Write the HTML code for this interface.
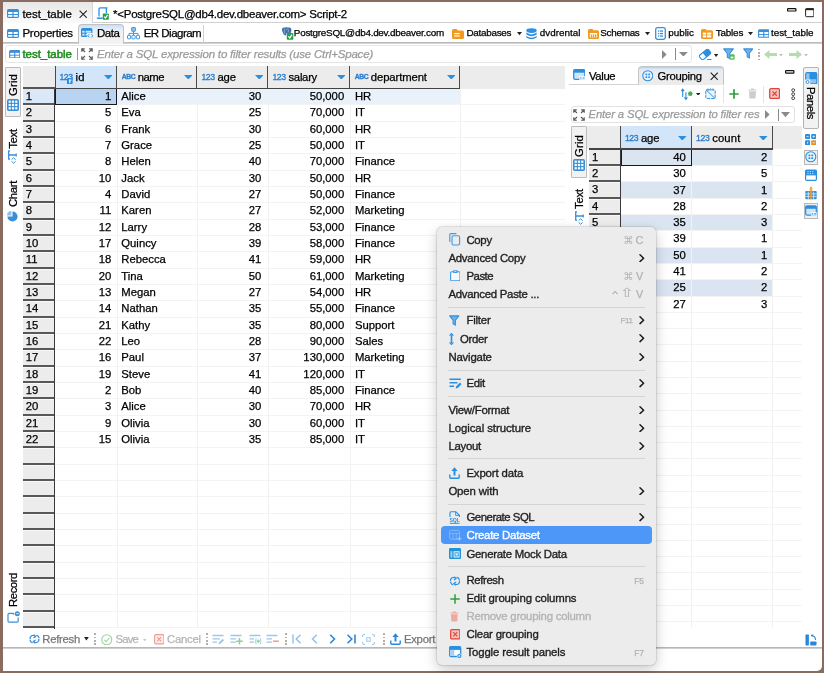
<!DOCTYPE html>
<html><head><meta charset="utf-8"><title>DBeaver</title>
<style>
html,body{margin:0;padding:0;}
body{width:824px;height:673px;overflow:hidden;background:#fff;font-family:"Liberation Sans",sans-serif;position:relative;}
#root{position:absolute;left:0;top:0;width:824px;height:673px;overflow:hidden;background:#fff;}
#root div,#root svg{position:absolute;box-sizing:border-box;}
#root{-webkit-text-stroke:0.25px;will-change:transform;background:transparent !important;}
</style></head><body><div id="root">
<div style="left:0px;top:0px;width:824px;height:673px;background:#8a6b5f;"></div>
<div style="left:2.5px;top:2px;width:819.5px;height:668.5px;background:#fff;border-radius:0 0 5px 0;"></div>
<div style="left:3px;top:2px;width:89.5px;height:20.5px;background:linear-gradient(#e7e7e7,#fafafa);border-right:1px solid #d4d4d4;"></div>
<svg style="left:7.3px;top:9px;" width="12" height="9" viewBox="0 0 12 9"><rect x="0" y="0" width="12" height="9" rx="1.6" fill="#3a8fd8"/><rect x="1.2" y="3" width="4.2" height="2" fill="#fff"/><rect x="6.6" y="3" width="4.2" height="2" fill="#fff"/><rect x="1.2" y="6" width="4.2" height="1.8" fill="#fff"/><rect x="6.6" y="6" width="4.2" height="1.8" fill="#fff"/></svg>
<div style="top:6.00px;font-size:11.5px;line-height:16px;color:#000;white-space:pre;letter-spacing:-0.027px;left:22.4px;">test_table</div>
<svg style="left:78.6px;top:10px;" width="8.4" height="8.4" viewBox="0 0 8.4 8.4"><path d="M0.6 0.6L7.8 7.8M7.8 0.6L0.6 7.8" stroke="#222" stroke-width="1.1" fill="none"/></svg>
<div style="top:6.00px;font-size:11.5px;line-height:16px;color:#000;white-space:pre;letter-spacing:-0.242px;left:113px;">*&lt;PostgreSQL@db4.dev.dbeaver.com&gt; Script-2</div>
<div style="left:93px;top:22px;width:729px;height:1px;background:#d0d0d0;"></div>
<div style="left:3px;top:41.8px;width:819px;height:1.8px;background:linear-gradient(#b2b2b2,#dcdcdc);"></div>
<svg style="left:7.3px;top:28.5px;" width="12" height="9" viewBox="0 0 12 9"><rect x="0" y="0" width="12" height="9" rx="1.6" fill="#3a8fd8"/><rect x="1.2" y="3" width="4.2" height="2" fill="#fff"/><rect x="6.6" y="3" width="4.2" height="2" fill="#fff"/><rect x="1.2" y="6" width="4.2" height="1.8" fill="#fff"/><rect x="6.6" y="6" width="4.2" height="1.8" fill="#fff"/></svg>
<div style="top:25.00px;font-size:11.5px;line-height:16px;color:#000;white-space:pre;letter-spacing:-0.191px;left:22.4px;">Properties</div>
<div style="left:77.5px;top:23.5px;width:46.5px;height:20px;background:linear-gradient(#c9dff8 0,#e4eefa 22%,#f1f1f1 45%,#f3f3f3);border:1px solid #c2c2c2;border-bottom:none;border-radius:4px 4px 0 0;"></div>
<div style="top:25.00px;font-size:11.5px;line-height:16px;color:#000;white-space:pre;letter-spacing:-0.448px;left:97px;">Data</div>
<div style="top:25.00px;font-size:11.5px;line-height:16px;color:#000;white-space:pre;letter-spacing:-0.513px;left:143.7px;">ER Diagram</div>
<div style="left:203px;top:25px;width:1px;height:18px;background:#d0d0d0;"></div>
<svg style="left:280.6px;top:27px;" width="13" height="13" viewBox="0 0 13 13"><path d="M1.2 1.6Q2.2 0.2 4 0.6Q5.4 -0.2 7 0.6Q9 0 10 1.4Q10.8 3 10 5L9 7.6Q8.4 8.4 7.6 7.8L7.4 6Q6.4 6.6 5.4 6.2L5.2 8Q4.4 8.8 3.4 8Q2.4 7 1.8 5.4Q0.6 3.4 1.2 1.6Z" fill="#3d6fa8"/><path d="M3.6 1.6Q2.8 3.6 3.8 6.6M6.8 1.4Q7.8 3.2 7.2 5.4M5 2.6Q5.8 2.2 6.2 3" stroke="#a9c4e2" stroke-width="0.7" fill="none"/><rect x="5.8" y="5.9" width="6.5" height="6.8" rx="1" fill="#1fa146"/><path d="M7.4 9.4L8.8 10.9L11 7.6" stroke="#fff" stroke-width="1.3" fill="none"/></svg>
<div style="top:24.90px;font-size:9.9px;line-height:16px;color:#000;white-space:pre;letter-spacing:-0.247px;left:293.8px;">PostgreSQL@db4.dev.dbeaver.com</div>
<svg style="left:452px;top:28.5px;" width="12" height="10" viewBox="0 0 12 10"><path d="M0 1.5Q0 0 1.5 0H4.5L6 1.5H10.5Q12 1.5 12 3V8.5Q12 10 10.5 10H1.5Q0 10 0 8.5Z" fill="#f39a1e"/><rect x="2.2" y="4" width="5.5" height="1.2" fill="#fff"/><rect x="2.2" y="6.4" width="5.5" height="1.2" fill="#fff"/></svg>
<div style="top:24.90px;font-size:9.9px;line-height:16px;color:#000;white-space:pre;letter-spacing:-0.259px;left:466.4px;">Databases</div>
<svg style="left:516.5px;top:32.4px;" width="5" height="3.2" viewBox="0 0 5 3.2"><path d="M0 0H5L2.5 3.2Z" fill="#222"/></svg>
<svg style="left:526px;top:28px;" width="11" height="12" viewBox="0 0 11 12"><ellipse cx="5.5" cy="2.6" rx="5.2" ry="2.4" fill="#2f8fe0"/><path d="M0.3 4.6Q5.5 8.2 10.7 4.6V6.4Q5.5 10 0.3 6.4Z" fill="#2f8fe0"/><path d="M0.3 8Q5.5 11.6 10.7 8V9.4Q5.5 13 0.3 9.4Z" fill="#2f8fe0"/></svg>
<div style="top:24.90px;font-size:9.9px;line-height:16px;color:#000;white-space:pre;letter-spacing:0.008px;left:539.7px;">dvdrental</div>
<svg style="left:588px;top:28.5px;" width="11" height="10" viewBox="0 0 11 10"><path d="M0 1.5Q0 0 1.5 0H4.5L5.5 1.3H9.5Q11 1.3 11 2.8V8.5Q11 10 9.5 10H1.5Q0 10 0 8.5Z" fill="#f39a1e"/><rect x="1.8" y="4" width="7.4" height="4.4" fill="#fff"/><rect x="2.8" y="5.4" width="1.4" height="3" fill="#f39a1e"/><rect x="4.9" y="5.4" width="1.4" height="3" fill="#f39a1e"/><rect x="7" y="5.4" width="1.4" height="3" fill="#f39a1e"/></svg>
<div style="top:24.90px;font-size:9.9px;line-height:16px;color:#000;white-space:pre;letter-spacing:-0.281px;left:600.3px;">Schemas</div>
<svg style="left:645px;top:32.4px;" width="5" height="3.2" viewBox="0 0 5 3.2"><path d="M0 0H5L2.5 3.2Z" fill="#222"/></svg>
<svg style="left:655px;top:26.8px;" width="11" height="13" viewBox="0 0 11 13"><rect x="0.7" y="0.7" width="9.6" height="11.6" rx="1.8" fill="#fff" stroke="#3a8fd8" stroke-width="1.3"/><rect x="3" y="3.4" width="1.3" height="1.3" fill="#3a8fd8"/><rect x="5" y="3.4" width="3" height="1.3" fill="#3a8fd8"/><rect x="3" y="5.9" width="1.3" height="1.3" fill="#3a8fd8"/><rect x="5" y="5.9" width="3" height="1.3" fill="#3a8fd8"/><rect x="3" y="8.4" width="1.3" height="1.3" fill="#3a8fd8"/><rect x="5" y="8.4" width="3" height="1.3" fill="#3a8fd8"/></svg>
<div style="top:24.90px;font-size:9.9px;line-height:16px;color:#000;white-space:pre;letter-spacing:-0.011px;left:668.2px;">public</div>
<svg style="left:701.3px;top:28.5px;" width="12" height="10" viewBox="0 0 12 10"><path d="M0 1.5Q0 0 1.5 0H4.5L5.5 1.3H10.5Q12 1.3 12 2.8V8.5Q12 10 10.5 10H1.5Q0 10 0 8.5Z" fill="#f39a1e"/><rect x="1.8" y="3.6" width="3.2" height="2" fill="#fff"/><rect x="5.8" y="3.6" width="4.4" height="2" fill="#fff"/><rect x="1.8" y="6.4" width="3.2" height="2" fill="#fff"/><rect x="5.8" y="6.4" width="4.4" height="2" fill="#fff"/></svg>
<div style="top:24.90px;font-size:9.9px;line-height:16px;color:#000;white-space:pre;letter-spacing:-0.203px;left:715.8px;">Tables</div>
<svg style="left:748px;top:32.4px;" width="5" height="3.2" viewBox="0 0 5 3.2"><path d="M0 0H5L2.5 3.2Z" fill="#222"/></svg>
<svg style="left:757.7px;top:29px;" width="11.5" height="9" viewBox="0 0 12 9"><rect x="0" y="0" width="12" height="9" rx="1.6" fill="#3a8fd8"/><rect x="1.2" y="3" width="4.2" height="2" fill="#fff"/><rect x="6.6" y="3" width="4.2" height="2" fill="#fff"/><rect x="1.2" y="6" width="4.2" height="1.8" fill="#fff"/><rect x="6.6" y="6" width="4.2" height="1.8" fill="#fff"/></svg>
<div style="top:24.90px;font-size:9.9px;line-height:16px;color:#000;white-space:pre;letter-spacing:-0.023px;left:771px;">test_table</div>
<div style="left:4.5px;top:45.3px;width:687.5px;height:17.5px;border:1px solid #e6e6e6;border-radius:3px;"></div>
<svg style="left:8.7px;top:49.8px;" width="11.5" height="8.5" viewBox="0 0 12 9"><rect x="0" y="0" width="12" height="9" rx="1.6" fill="#3a8fd8"/><rect x="1.2" y="3" width="4.2" height="2" fill="#fff"/><rect x="6.6" y="3" width="4.2" height="2" fill="#fff"/><rect x="1.2" y="6" width="4.2" height="1.8" fill="#fff"/><rect x="6.6" y="6" width="4.2" height="1.8" fill="#fff"/></svg>
<div style="top:46.00px;font-size:11.5px;line-height:16px;color:#1e8b1e;white-space:pre;letter-spacing:-0.027px;left:22.4px;-webkit-text-stroke:0.5px #1e8b1e;">test_table</div>
<div style="left:77.2px;top:48px;width:1px;height:12px;background:#9a9a9a;"></div>
<svg style="left:81px;top:48px;" width="12" height="12" viewBox="0 0 12 12"><g stroke="#585858" stroke-width="1.15" fill="none"><path d="M0.8 3.8V0.8H3.8M0.8 0.8L4 4"/><path d="M11.2 3.8V0.8H8.2M11.2 0.8L8 4"/><path d="M0.8 8.2V11.2H3.8M0.8 11.2L4 8"/><path d="M11.2 8.2V11.2H8.2M11.2 11.2L8 8"/></g></svg>
<div style="top:46.00px;font-size:11.5px;line-height:16px;color:#9a9a9a;white-space:pre;letter-spacing:-0.183px;font-style:italic;left:97px;">Enter a SQL expression to filter results (use Ctrl+Space)</div>
<svg style="left:661.5px;top:49.5px;" width="5" height="9" viewBox="0 0 5 9"><path d="M0 0L4.6 4.5L0 9Z" fill="#8a8a8a"/></svg>
<div style="left:675px;top:47.7px;width:1px;height:12px;background:#8a8a8a;"></div>
<svg style="left:678.8px;top:51.8px;" width="8.8" height="4.6" viewBox="0 0 8.8 4.6"><path d="M0 0H8.8L4.4 4.6Z" fill="#8a8a8a"/></svg>
<svg style="left:699px;top:48.5px;" width="13" height="11.5" viewBox="0 0 13 11.5"><g transform="rotate(-40 6 5.5)"><rect x="0.2" y="2.6" width="11.6" height="5.8" rx="1.6" fill="#fff" stroke="#2b8fe0" stroke-width="1.1"/><path d="M5.2 2.6H10.2Q11.8 2.6 11.8 4.2V6.8Q11.8 8.4 10.2 8.4H5.2Z" fill="#2b8fe0"/></g><rect x="8.2" y="10" width="4.2" height="1.2" fill="#2b8fe0"/></svg>
<svg style="left:714.2px;top:53.5px;" width="4.2" height="3" viewBox="0 0 4.2 3"><path d="M0 0H4.2L2.1 3Z" fill="#222"/></svg>
<svg style="left:722.6px;top:47.5px;" width="11" height="12" viewBox="0 0 11 12"><path d="M0.7 0.9H10.3L6.7 5.5V10.6L4.3 9.2V5.5Z" fill="#6cb2ec" stroke="#3a8fd8" stroke-width="1.1" stroke-linejoin="round"/></svg>
<svg style="left:729.3px;top:54px;" width="6" height="6" viewBox="0 0 6 6"><rect x="0.3" y="0.3" width="5.4" height="5.4" rx="1.4" fill="#55b85f"/><rect x="1.6" y="2.6" width="2.8" height="1.8" fill="#fff"/></svg>
<svg style="left:742.6px;top:47.5px;" width="10.5" height="11.5" viewBox="0 0 11 12"><path d="M0.7 0.9H10.3L6.7 5.5V10.6L4.3 9.2V5.5Z" fill="#6cb2ec" stroke="#3a8fd8" stroke-width="1.1" stroke-linejoin="round"/></svg>
<div style="left:758.2px;top:48.6px;width:1.7px;height:1.7px;background:#b7ada1;"></div>
<div style="left:758.2px;top:51.9px;width:1.7px;height:1.7px;background:#b7ada1;"></div>
<div style="left:758.2px;top:55.2px;width:1.7px;height:1.7px;background:#b7ada1;"></div>
<div style="left:758.2px;top:58.5px;width:1.7px;height:1.7px;background:#b7ada1;"></div>
<svg style="left:764px;top:49.5px;" width="13" height="9" viewBox="0 0 13 9"><path d="M0 4.5L5.5 0V3H13V6H5.5V9Z" fill="#b5dcae"/></svg>
<svg style="left:779.3px;top:53.7px;" width="4" height="2.6" viewBox="0 0 4 2.6"><path d="M0 0H4L2.0 2.6Z" fill="#c2c2c2"/></svg>
<svg style="left:788.5px;top:49.5px;" width="13" height="9" viewBox="0 0 13 9"><path d="M13 4.5L7.5 0V3H0V6H7.5V9Z" fill="#b5dcae"/></svg>
<svg style="left:803.8px;top:53.7px;" width="4" height="2.6" viewBox="0 0 4 2.6"><path d="M0 0H4L2.0 2.6Z" fill="#c2c2c2"/></svg>
<div style="left:23px;top:66px;width:542px;height:22px;background:#ececec;"></div>
<div style="left:55px;top:103.5px;width:510px;height:1px;background:#f3f3f3;"></div>
<div style="left:55px;top:120.5px;width:510px;height:1px;background:#f3f3f3;"></div>
<div style="left:55px;top:136.5px;width:510px;height:1px;background:#f3f3f3;"></div>
<div style="left:55px;top:152.5px;width:510px;height:1px;background:#f3f3f3;"></div>
<div style="left:55px;top:169.5px;width:510px;height:1px;background:#f3f3f3;"></div>
<div style="left:55px;top:185.5px;width:510px;height:1px;background:#f3f3f3;"></div>
<div style="left:55px;top:201.5px;width:510px;height:1px;background:#f3f3f3;"></div>
<div style="left:55px;top:218.5px;width:510px;height:1px;background:#f3f3f3;"></div>
<div style="left:55px;top:234.5px;width:510px;height:1px;background:#f3f3f3;"></div>
<div style="left:55px;top:250.5px;width:510px;height:1px;background:#f3f3f3;"></div>
<div style="left:55px;top:267.5px;width:510px;height:1px;background:#f3f3f3;"></div>
<div style="left:55px;top:283.5px;width:510px;height:1px;background:#f3f3f3;"></div>
<div style="left:55px;top:299.5px;width:510px;height:1px;background:#f3f3f3;"></div>
<div style="left:55px;top:316.5px;width:510px;height:1px;background:#f3f3f3;"></div>
<div style="left:55px;top:332.5px;width:510px;height:1px;background:#f3f3f3;"></div>
<div style="left:55px;top:348.5px;width:510px;height:1px;background:#f3f3f3;"></div>
<div style="left:55px;top:365.5px;width:510px;height:1px;background:#f3f3f3;"></div>
<div style="left:55px;top:381.5px;width:510px;height:1px;background:#f3f3f3;"></div>
<div style="left:55px;top:397.5px;width:510px;height:1px;background:#f3f3f3;"></div>
<div style="left:55px;top:414.5px;width:510px;height:1px;background:#f3f3f3;"></div>
<div style="left:55px;top:430.5px;width:510px;height:1px;background:#f3f3f3;"></div>
<div style="left:55px;top:446.5px;width:510px;height:1px;background:#f3f3f3;"></div>
<div style="left:55px;top:463.5px;width:510px;height:1px;background:#f3f3f3;"></div>
<div style="left:55px;top:479.5px;width:510px;height:1px;background:#f3f3f3;"></div>
<div style="left:55px;top:495.5px;width:510px;height:1px;background:#f3f3f3;"></div>
<div style="left:55px;top:512.5px;width:510px;height:1px;background:#f3f3f3;"></div>
<div style="left:55px;top:528.5px;width:510px;height:1px;background:#f3f3f3;"></div>
<div style="left:55px;top:544.5px;width:510px;height:1px;background:#f3f3f3;"></div>
<div style="left:55px;top:561.5px;width:510px;height:1px;background:#f3f3f3;"></div>
<div style="left:55px;top:577.5px;width:510px;height:1px;background:#f3f3f3;"></div>
<div style="left:55px;top:593.5px;width:510px;height:1px;background:#f3f3f3;"></div>
<div style="left:55px;top:610.5px;width:510px;height:1px;background:#f3f3f3;"></div>
<div style="left:55px;top:626.5px;width:510px;height:1px;background:#f3f3f3;"></div>
<div style="left:116.5px;top:88px;width:1px;height:538.89px;background:#f1f1f1;"></div>
<div style="left:196.5px;top:88px;width:1px;height:538.89px;background:#f1f1f1;"></div>
<div style="left:267.5px;top:88px;width:1px;height:538.89px;background:#f1f1f1;"></div>
<div style="left:349.5px;top:88px;width:1px;height:538.89px;background:#f1f1f1;"></div>
<div style="left:459.5px;top:88px;width:1px;height:538.89px;background:#f1f1f1;"></div>
<div style="left:460px;top:66px;width:105px;height:22.6px;background:#ececec;"></div>
<div style="left:55px;top:88px;width:405px;height:16.33px;background:#e9f1fb;"></div>
<div style="left:55.3px;top:87.8px;width:61.4px;height:17.13px;background:#b9d4f1;border:1.4px solid #1a1a1a;"></div>
<div style="left:55px;top:66px;width:62px;height:22px;background:#d3e5f8;border-right:1px solid #4a4a4a;"></div>
<div style="top:69.00px;font-size:8.7px;line-height:16px;color:#2b7fd0;white-space:pre;letter-spacing:-0.372px;left:59.400000000000006px;-webkit-text-stroke:0.35px #2b7fd0;">123</div>
<svg style="left:67.4px;top:77.8px;" width="5.6" height="6.4" viewBox="0 0 5.6 6.4"><rect x="0" y="0" width="5.6" height="6.4" rx="1.2" fill="#2b8fe0"/><rect x="2.2" y="1.6" width="1.2" height="3.6" fill="#fff"/><rect x="2.2" y="1.6" width="2.2" height="1" fill="#fff"/></svg>
<div style="top:69.20px;font-size:11.3px;line-height:16px;color:#000;white-space:pre;letter-spacing:0.202px;left:75.5px;">id</div>
<svg style="left:103.5px;top:74.9px;" width="8.6" height="4.6" viewBox="0 0 8.6 4.6"><path d="M0 0H8.6L4.3 4.6Z" fill="#2b8fe0"/></svg>
<div style="left:117px;top:66px;width:80px;height:22px;background:#ececec;border-right:1px solid #4a4a4a;"></div>
<div style="top:69.20px;font-size:6.8px;line-height:16px;color:#2b7fd0;white-space:pre;letter-spacing:-0.444px;font-weight:bold;left:121.8px;-webkit-text-stroke:0.3px #2b7fd0;">ABC</div>
<div style="top:69.20px;font-size:11.3px;line-height:16px;color:#000;white-space:pre;letter-spacing:-0.517px;left:137.8px;">name</div>
<svg style="left:183.5px;top:74.9px;" width="8.6" height="4.6" viewBox="0 0 8.6 4.6"><path d="M0 0H8.6L4.3 4.6Z" fill="#2b8fe0"/></svg>
<div style="left:197px;top:66px;width:71px;height:22px;background:#ececec;border-right:1px solid #4a4a4a;"></div>
<div style="top:69.00px;font-size:8.7px;line-height:16px;color:#2b7fd0;white-space:pre;letter-spacing:-0.372px;left:201.39999999999998px;-webkit-text-stroke:0.35px #2b7fd0;">123</div>
<div style="top:69.20px;font-size:11.3px;line-height:16px;color:#000;white-space:pre;letter-spacing:-0.218px;left:217.5px;">age</div>
<svg style="left:254.5px;top:74.9px;" width="8.6" height="4.6" viewBox="0 0 8.6 4.6"><path d="M0 0H8.6L4.3 4.6Z" fill="#2b8fe0"/></svg>
<div style="left:268px;top:66px;width:82px;height:22px;background:#ececec;border-right:1px solid #4a4a4a;"></div>
<div style="top:69.00px;font-size:8.7px;line-height:16px;color:#2b7fd0;white-space:pre;letter-spacing:-0.372px;left:272.4px;-webkit-text-stroke:0.35px #2b7fd0;">123</div>
<div style="top:69.20px;font-size:11.3px;line-height:16px;color:#000;white-space:pre;letter-spacing:-0.274px;left:288.5px;">salary</div>
<svg style="left:336.5px;top:74.9px;" width="8.6" height="4.6" viewBox="0 0 8.6 4.6"><path d="M0 0H8.6L4.3 4.6Z" fill="#2b8fe0"/></svg>
<div style="left:350px;top:66px;width:110px;height:22px;background:#ececec;border-right:1px solid #4a4a4a;"></div>
<div style="top:69.20px;font-size:6.8px;line-height:16px;color:#2b7fd0;white-space:pre;letter-spacing:-0.444px;font-weight:bold;left:354.8px;-webkit-text-stroke:0.3px #2b7fd0;">ABC</div>
<div style="top:69.20px;font-size:11.3px;line-height:16px;color:#000;white-space:pre;letter-spacing:-0.106px;left:370.8px;">department</div>
<svg style="left:446.5px;top:74.9px;" width="8.6" height="4.6" viewBox="0 0 8.6 4.6"><path d="M0 0H8.6L4.3 4.6Z" fill="#2b8fe0"/></svg>
<div style="left:54.5px;top:66px;width:1px;height:22px;background:#4a4a4a;"></div>
<div style="left:23px;top:87.5px;width:437px;height:1.2px;background:#444;"></div>
<div style="left:23px;top:88.0px;width:32px;height:16.83px;background:#dbe8f7;"></div>
<div style="left:23px;top:104.33px;width:32px;height:16.83px;background:#ececec;"></div>
<div style="left:23px;top:120.66px;width:32px;height:16.83px;background:#ececec;"></div>
<div style="left:23px;top:136.99px;width:32px;height:16.83px;background:#ececec;"></div>
<div style="left:23px;top:153.32px;width:32px;height:16.83px;background:#ececec;"></div>
<div style="left:23px;top:169.64999999999998px;width:32px;height:16.83px;background:#ececec;"></div>
<div style="left:23px;top:185.98px;width:32px;height:16.83px;background:#ececec;"></div>
<div style="left:23px;top:202.31px;width:32px;height:16.83px;background:#ececec;"></div>
<div style="left:23px;top:218.64px;width:32px;height:16.83px;background:#ececec;"></div>
<div style="left:23px;top:234.96999999999997px;width:32px;height:16.83px;background:#ececec;"></div>
<div style="left:23px;top:251.29999999999998px;width:32px;height:16.83px;background:#ececec;"></div>
<div style="left:23px;top:267.63px;width:32px;height:16.83px;background:#ececec;"></div>
<div style="left:23px;top:283.96px;width:32px;height:16.83px;background:#ececec;"></div>
<div style="left:23px;top:300.28999999999996px;width:32px;height:16.83px;background:#ececec;"></div>
<div style="left:23px;top:316.62px;width:32px;height:16.83px;background:#ececec;"></div>
<div style="left:23px;top:332.95px;width:32px;height:16.83px;background:#ececec;"></div>
<div style="left:23px;top:349.28px;width:32px;height:16.83px;background:#ececec;"></div>
<div style="left:23px;top:365.60999999999996px;width:32px;height:16.83px;background:#ececec;"></div>
<div style="left:23px;top:381.93999999999994px;width:32px;height:16.83px;background:#ececec;"></div>
<div style="left:23px;top:398.27px;width:32px;height:16.83px;background:#ececec;"></div>
<div style="left:23px;top:414.59999999999997px;width:32px;height:16.83px;background:#ececec;"></div>
<div style="left:23px;top:430.92999999999995px;width:32px;height:16.83px;background:#ececec;"></div>
<div style="left:23px;top:447.26px;width:32px;height:16.83px;background:#ececec;"></div>
<div style="left:23px;top:463.59px;width:32px;height:16.83px;background:#ececec;"></div>
<div style="left:23px;top:479.91999999999996px;width:32px;height:16.83px;background:#ececec;"></div>
<div style="left:23px;top:496.24999999999994px;width:32px;height:16.83px;background:#ececec;"></div>
<div style="left:23px;top:512.5799999999999px;width:32px;height:16.83px;background:#ececec;"></div>
<div style="left:23px;top:528.91px;width:32px;height:16.83px;background:#ececec;"></div>
<div style="left:23px;top:545.24px;width:32px;height:16.83px;background:#ececec;"></div>
<div style="left:23px;top:561.5699999999999px;width:32px;height:16.83px;background:#ececec;"></div>
<div style="left:23px;top:577.9px;width:32px;height:16.83px;background:#ececec;"></div>
<div style="left:23px;top:594.23px;width:32px;height:16.83px;background:#ececec;"></div>
<div style="left:23px;top:610.56px;width:32px;height:16.83px;background:#ececec;"></div>
<div style="left:23px;top:103.15px;width:32px;height:1.7px;background:#585858;"></div>
<div style="left:23px;top:104.85px;width:32px;height:0.8px;background:#f8f8f8;"></div>
<div style="top:88.00px;font-size:11.3px;line-height:16px;color:#000;white-space:pre;left:25.7px;">1</div>
<div style="left:23px;top:120.15px;width:32px;height:1.7px;background:#585858;"></div>
<div style="left:23px;top:121.85px;width:32px;height:0.8px;background:#f8f8f8;"></div>
<div style="top:104.33px;font-size:11.3px;line-height:16px;color:#000;white-space:pre;left:25.7px;">2</div>
<div style="left:23px;top:136.15px;width:32px;height:1.7px;background:#585858;"></div>
<div style="left:23px;top:137.85px;width:32px;height:0.8px;background:#f8f8f8;"></div>
<div style="top:120.66px;font-size:11.3px;line-height:16px;color:#000;white-space:pre;left:25.7px;">3</div>
<div style="left:23px;top:152.15px;width:32px;height:1.7px;background:#585858;"></div>
<div style="left:23px;top:153.85px;width:32px;height:0.8px;background:#f8f8f8;"></div>
<div style="top:136.99px;font-size:11.3px;line-height:16px;color:#000;white-space:pre;left:25.7px;">4</div>
<div style="left:23px;top:169.15px;width:32px;height:1.7px;background:#585858;"></div>
<div style="left:23px;top:170.85px;width:32px;height:0.8px;background:#f8f8f8;"></div>
<div style="top:153.32px;font-size:11.3px;line-height:16px;color:#000;white-space:pre;left:25.7px;">5</div>
<div style="left:23px;top:185.15px;width:32px;height:1.7px;background:#585858;"></div>
<div style="left:23px;top:186.85px;width:32px;height:0.8px;background:#f8f8f8;"></div>
<div style="top:169.65px;font-size:11.3px;line-height:16px;color:#000;white-space:pre;left:25.7px;">6</div>
<div style="left:23px;top:201.15px;width:32px;height:1.7px;background:#585858;"></div>
<div style="left:23px;top:202.85px;width:32px;height:0.8px;background:#f8f8f8;"></div>
<div style="top:185.98px;font-size:11.3px;line-height:16px;color:#000;white-space:pre;left:25.7px;">7</div>
<div style="left:23px;top:218.15px;width:32px;height:1.7px;background:#585858;"></div>
<div style="left:23px;top:219.85px;width:32px;height:0.8px;background:#f8f8f8;"></div>
<div style="top:202.31px;font-size:11.3px;line-height:16px;color:#000;white-space:pre;left:25.7px;">8</div>
<div style="left:23px;top:234.15px;width:32px;height:1.7px;background:#585858;"></div>
<div style="left:23px;top:235.85px;width:32px;height:0.8px;background:#f8f8f8;"></div>
<div style="top:218.64px;font-size:11.3px;line-height:16px;color:#000;white-space:pre;left:25.7px;">9</div>
<div style="left:23px;top:250.15px;width:32px;height:1.7px;background:#585858;"></div>
<div style="left:23px;top:251.85px;width:32px;height:0.8px;background:#f8f8f8;"></div>
<div style="top:234.97px;font-size:11.3px;line-height:16px;color:#000;white-space:pre;left:25.7px;">10</div>
<div style="left:23px;top:267.15px;width:32px;height:1.7px;background:#585858;"></div>
<div style="left:23px;top:268.85px;width:32px;height:0.8px;background:#f8f8f8;"></div>
<div style="top:251.30px;font-size:11.3px;line-height:16px;color:#000;white-space:pre;left:25.7px;">11</div>
<div style="left:23px;top:283.15px;width:32px;height:1.7px;background:#585858;"></div>
<div style="left:23px;top:284.85px;width:32px;height:0.8px;background:#f8f8f8;"></div>
<div style="top:267.63px;font-size:11.3px;line-height:16px;color:#000;white-space:pre;left:25.7px;">12</div>
<div style="left:23px;top:299.15px;width:32px;height:1.7px;background:#585858;"></div>
<div style="left:23px;top:300.85px;width:32px;height:0.8px;background:#f8f8f8;"></div>
<div style="top:283.96px;font-size:11.3px;line-height:16px;color:#000;white-space:pre;left:25.7px;">13</div>
<div style="left:23px;top:316.15px;width:32px;height:1.7px;background:#585858;"></div>
<div style="left:23px;top:317.85px;width:32px;height:0.8px;background:#f8f8f8;"></div>
<div style="top:300.29px;font-size:11.3px;line-height:16px;color:#000;white-space:pre;left:25.7px;">14</div>
<div style="left:23px;top:332.15px;width:32px;height:1.7px;background:#585858;"></div>
<div style="left:23px;top:333.85px;width:32px;height:0.8px;background:#f8f8f8;"></div>
<div style="top:316.62px;font-size:11.3px;line-height:16px;color:#000;white-space:pre;left:25.7px;">15</div>
<div style="left:23px;top:348.15px;width:32px;height:1.7px;background:#585858;"></div>
<div style="left:23px;top:349.85px;width:32px;height:0.8px;background:#f8f8f8;"></div>
<div style="top:332.95px;font-size:11.3px;line-height:16px;color:#000;white-space:pre;left:25.7px;">16</div>
<div style="left:23px;top:365.15px;width:32px;height:1.7px;background:#585858;"></div>
<div style="left:23px;top:366.85px;width:32px;height:0.8px;background:#f8f8f8;"></div>
<div style="top:349.28px;font-size:11.3px;line-height:16px;color:#000;white-space:pre;left:25.7px;">17</div>
<div style="left:23px;top:381.15px;width:32px;height:1.7px;background:#585858;"></div>
<div style="left:23px;top:382.85px;width:32px;height:0.8px;background:#f8f8f8;"></div>
<div style="top:365.61px;font-size:11.3px;line-height:16px;color:#000;white-space:pre;left:25.7px;">18</div>
<div style="left:23px;top:397.15px;width:32px;height:1.7px;background:#585858;"></div>
<div style="left:23px;top:398.85px;width:32px;height:0.8px;background:#f8f8f8;"></div>
<div style="top:381.94px;font-size:11.3px;line-height:16px;color:#000;white-space:pre;left:25.7px;">19</div>
<div style="left:23px;top:414.15px;width:32px;height:1.7px;background:#585858;"></div>
<div style="left:23px;top:415.85px;width:32px;height:0.8px;background:#f8f8f8;"></div>
<div style="top:398.27px;font-size:11.3px;line-height:16px;color:#000;white-space:pre;left:25.7px;">20</div>
<div style="left:23px;top:430.15px;width:32px;height:1.7px;background:#585858;"></div>
<div style="left:23px;top:431.85px;width:32px;height:0.8px;background:#f8f8f8;"></div>
<div style="top:414.60px;font-size:11.3px;line-height:16px;color:#000;white-space:pre;left:25.7px;">21</div>
<div style="left:23px;top:446.15px;width:32px;height:1.7px;background:#585858;"></div>
<div style="left:23px;top:447.85px;width:32px;height:0.8px;background:#f8f8f8;"></div>
<div style="top:430.93px;font-size:11.3px;line-height:16px;color:#000;white-space:pre;left:25.7px;">22</div>
<div style="left:23px;top:463.15px;width:32px;height:1.7px;background:#585858;"></div>
<div style="left:23px;top:464.85px;width:32px;height:0.8px;background:#f8f8f8;"></div>
<div style="left:23px;top:479.15px;width:32px;height:1.7px;background:#585858;"></div>
<div style="left:23px;top:480.85px;width:32px;height:0.8px;background:#f8f8f8;"></div>
<div style="left:23px;top:495.15px;width:32px;height:1.7px;background:#585858;"></div>
<div style="left:23px;top:496.85px;width:32px;height:0.8px;background:#f8f8f8;"></div>
<div style="left:23px;top:512.15px;width:32px;height:1.7px;background:#585858;"></div>
<div style="left:23px;top:513.85px;width:32px;height:0.8px;background:#f8f8f8;"></div>
<div style="left:23px;top:528.15px;width:32px;height:1.7px;background:#585858;"></div>
<div style="left:23px;top:529.85px;width:32px;height:0.8px;background:#f8f8f8;"></div>
<div style="left:23px;top:544.15px;width:32px;height:1.7px;background:#585858;"></div>
<div style="left:23px;top:545.85px;width:32px;height:0.8px;background:#f8f8f8;"></div>
<div style="left:23px;top:561.15px;width:32px;height:1.7px;background:#585858;"></div>
<div style="left:23px;top:562.85px;width:32px;height:0.8px;background:#f8f8f8;"></div>
<div style="left:23px;top:577.15px;width:32px;height:1.7px;background:#585858;"></div>
<div style="left:23px;top:578.85px;width:32px;height:0.8px;background:#f8f8f8;"></div>
<div style="left:23px;top:593.15px;width:32px;height:1.7px;background:#585858;"></div>
<div style="left:23px;top:594.85px;width:32px;height:0.8px;background:#f8f8f8;"></div>
<div style="left:23px;top:610.15px;width:32px;height:1.7px;background:#585858;"></div>
<div style="left:23px;top:611.85px;width:32px;height:0.8px;background:#f8f8f8;"></div>
<div style="left:23px;top:626.15px;width:32px;height:1.7px;background:#585858;"></div>
<div style="left:54.3px;top:88px;width:1.2px;height:540.89px;background:#3a3a3a;"></div>
<div style="left:23px;top:87.4px;width:32px;height:1.3px;background:#555;"></div>
<div style="top:87.90px;font-size:11.3px;line-height:16px;color:#000;white-space:pre;left:104.92px;">1</div>
<div style="top:87.90px;font-size:11.3px;line-height:16px;color:#000;white-space:pre;left:121.3px;">Alice</div>
<div style="top:87.90px;font-size:11.3px;line-height:16px;color:#000;white-space:pre;left:248.83px;">30</div>
<div style="top:87.90px;font-size:11.3px;line-height:16px;color:#000;white-space:pre;left:309.64px;">50,000</div>
<div style="top:87.90px;font-size:11.3px;line-height:16px;color:#000;white-space:pre;left:354.9px;">HR</div>
<div style="top:104.23px;font-size:11.3px;line-height:16px;color:#000;white-space:pre;left:104.92px;">5</div>
<div style="top:104.23px;font-size:11.3px;line-height:16px;color:#000;white-space:pre;left:121.3px;">Eva</div>
<div style="top:104.23px;font-size:11.3px;line-height:16px;color:#000;white-space:pre;left:248.83px;">25</div>
<div style="top:104.23px;font-size:11.3px;line-height:16px;color:#000;white-space:pre;left:309.64px;">70,000</div>
<div style="top:104.23px;font-size:11.3px;line-height:16px;color:#000;white-space:pre;left:354.9px;">IT</div>
<div style="top:120.56px;font-size:11.3px;line-height:16px;color:#000;white-space:pre;left:104.92px;">6</div>
<div style="top:120.56px;font-size:11.3px;line-height:16px;color:#000;white-space:pre;left:121.3px;">Frank</div>
<div style="top:120.56px;font-size:11.3px;line-height:16px;color:#000;white-space:pre;left:248.83px;">30</div>
<div style="top:120.56px;font-size:11.3px;line-height:16px;color:#000;white-space:pre;left:309.64px;">60,000</div>
<div style="top:120.56px;font-size:11.3px;line-height:16px;color:#000;white-space:pre;left:354.9px;">HR</div>
<div style="top:136.89px;font-size:11.3px;line-height:16px;color:#000;white-space:pre;left:104.92px;">7</div>
<div style="top:136.89px;font-size:11.3px;line-height:16px;color:#000;white-space:pre;left:121.3px;">Grace</div>
<div style="top:136.89px;font-size:11.3px;line-height:16px;color:#000;white-space:pre;left:248.83px;">25</div>
<div style="top:136.89px;font-size:11.3px;line-height:16px;color:#000;white-space:pre;left:309.64px;">50,000</div>
<div style="top:136.89px;font-size:11.3px;line-height:16px;color:#000;white-space:pre;left:354.9px;">IT</div>
<div style="top:153.22px;font-size:11.3px;line-height:16px;color:#000;white-space:pre;left:104.92px;">8</div>
<div style="top:153.22px;font-size:11.3px;line-height:16px;color:#000;white-space:pre;left:121.3px;">Helen</div>
<div style="top:153.22px;font-size:11.3px;line-height:16px;color:#000;white-space:pre;left:248.83px;">40</div>
<div style="top:153.22px;font-size:11.3px;line-height:16px;color:#000;white-space:pre;left:309.64px;">70,000</div>
<div style="top:153.22px;font-size:11.3px;line-height:16px;color:#000;white-space:pre;left:354.9px;">Finance</div>
<div style="top:169.55px;font-size:11.3px;line-height:16px;color:#000;white-space:pre;left:98.63px;">10</div>
<div style="top:169.55px;font-size:11.3px;line-height:16px;color:#000;white-space:pre;left:121.3px;">Jack</div>
<div style="top:169.55px;font-size:11.3px;line-height:16px;color:#000;white-space:pre;left:248.83px;">30</div>
<div style="top:169.55px;font-size:11.3px;line-height:16px;color:#000;white-space:pre;left:309.64px;">50,000</div>
<div style="top:169.55px;font-size:11.3px;line-height:16px;color:#000;white-space:pre;left:354.9px;">HR</div>
<div style="top:185.88px;font-size:11.3px;line-height:16px;color:#000;white-space:pre;left:104.92px;">4</div>
<div style="top:185.88px;font-size:11.3px;line-height:16px;color:#000;white-space:pre;left:121.3px;">David</div>
<div style="top:185.88px;font-size:11.3px;line-height:16px;color:#000;white-space:pre;left:248.83px;">27</div>
<div style="top:185.88px;font-size:11.3px;line-height:16px;color:#000;white-space:pre;left:309.64px;">50,000</div>
<div style="top:185.88px;font-size:11.3px;line-height:16px;color:#000;white-space:pre;left:354.9px;">Finance</div>
<div style="top:202.21px;font-size:11.3px;line-height:16px;color:#000;white-space:pre;left:99.47px;">11</div>
<div style="top:202.21px;font-size:11.3px;line-height:16px;color:#000;white-space:pre;left:121.3px;">Karen</div>
<div style="top:202.21px;font-size:11.3px;line-height:16px;color:#000;white-space:pre;left:248.83px;">27</div>
<div style="top:202.21px;font-size:11.3px;line-height:16px;color:#000;white-space:pre;left:309.64px;">52,000</div>
<div style="top:202.21px;font-size:11.3px;line-height:16px;color:#000;white-space:pre;left:354.9px;">Marketing</div>
<div style="top:218.54px;font-size:11.3px;line-height:16px;color:#000;white-space:pre;left:98.63px;">12</div>
<div style="top:218.54px;font-size:11.3px;line-height:16px;color:#000;white-space:pre;left:121.3px;">Larry</div>
<div style="top:218.54px;font-size:11.3px;line-height:16px;color:#000;white-space:pre;left:248.83px;">28</div>
<div style="top:218.54px;font-size:11.3px;line-height:16px;color:#000;white-space:pre;left:309.64px;">53,000</div>
<div style="top:218.54px;font-size:11.3px;line-height:16px;color:#000;white-space:pre;left:354.9px;">Finance</div>
<div style="top:234.87px;font-size:11.3px;line-height:16px;color:#000;white-space:pre;left:98.63px;">17</div>
<div style="top:234.87px;font-size:11.3px;line-height:16px;color:#000;white-space:pre;left:121.3px;">Quincy</div>
<div style="top:234.87px;font-size:11.3px;line-height:16px;color:#000;white-space:pre;left:248.83px;">39</div>
<div style="top:234.87px;font-size:11.3px;line-height:16px;color:#000;white-space:pre;left:309.64px;">58,000</div>
<div style="top:234.87px;font-size:11.3px;line-height:16px;color:#000;white-space:pre;left:354.9px;">Finance</div>
<div style="top:251.20px;font-size:11.3px;line-height:16px;color:#000;white-space:pre;left:98.63px;">18</div>
<div style="top:251.20px;font-size:11.3px;line-height:16px;color:#000;white-space:pre;left:121.3px;">Rebecca</div>
<div style="top:251.20px;font-size:11.3px;line-height:16px;color:#000;white-space:pre;left:248.83px;">41</div>
<div style="top:251.20px;font-size:11.3px;line-height:16px;color:#000;white-space:pre;left:309.64px;">59,000</div>
<div style="top:251.20px;font-size:11.3px;line-height:16px;color:#000;white-space:pre;left:354.9px;">HR</div>
<div style="top:267.53px;font-size:11.3px;line-height:16px;color:#000;white-space:pre;left:98.63px;">20</div>
<div style="top:267.53px;font-size:11.3px;line-height:16px;color:#000;white-space:pre;left:121.3px;">Tina</div>
<div style="top:267.53px;font-size:11.3px;line-height:16px;color:#000;white-space:pre;left:248.83px;">50</div>
<div style="top:267.53px;font-size:11.3px;line-height:16px;color:#000;white-space:pre;left:309.64px;">61,000</div>
<div style="top:267.53px;font-size:11.3px;line-height:16px;color:#000;white-space:pre;left:354.9px;">Marketing</div>
<div style="top:283.86px;font-size:11.3px;line-height:16px;color:#000;white-space:pre;left:98.63px;">13</div>
<div style="top:283.86px;font-size:11.3px;line-height:16px;color:#000;white-space:pre;left:121.3px;">Megan</div>
<div style="top:283.86px;font-size:11.3px;line-height:16px;color:#000;white-space:pre;left:248.83px;">27</div>
<div style="top:283.86px;font-size:11.3px;line-height:16px;color:#000;white-space:pre;left:309.64px;">54,000</div>
<div style="top:283.86px;font-size:11.3px;line-height:16px;color:#000;white-space:pre;left:354.9px;">HR</div>
<div style="top:300.19px;font-size:11.3px;line-height:16px;color:#000;white-space:pre;left:98.63px;">14</div>
<div style="top:300.19px;font-size:11.3px;line-height:16px;color:#000;white-space:pre;left:121.3px;">Nathan</div>
<div style="top:300.19px;font-size:11.3px;line-height:16px;color:#000;white-space:pre;left:248.83px;">35</div>
<div style="top:300.19px;font-size:11.3px;line-height:16px;color:#000;white-space:pre;left:309.64px;">55,000</div>
<div style="top:300.19px;font-size:11.3px;line-height:16px;color:#000;white-space:pre;left:354.9px;">Finance</div>
<div style="top:316.52px;font-size:11.3px;line-height:16px;color:#000;white-space:pre;left:98.63px;">21</div>
<div style="top:316.52px;font-size:11.3px;line-height:16px;color:#000;white-space:pre;left:121.3px;">Kathy</div>
<div style="top:316.52px;font-size:11.3px;line-height:16px;color:#000;white-space:pre;left:248.83px;">35</div>
<div style="top:316.52px;font-size:11.3px;line-height:16px;color:#000;white-space:pre;left:309.64px;">80,000</div>
<div style="top:316.52px;font-size:11.3px;line-height:16px;color:#000;white-space:pre;left:354.9px;">Support</div>
<div style="top:332.85px;font-size:11.3px;line-height:16px;color:#000;white-space:pre;left:98.63px;">22</div>
<div style="top:332.85px;font-size:11.3px;line-height:16px;color:#000;white-space:pre;left:121.3px;">Leo</div>
<div style="top:332.85px;font-size:11.3px;line-height:16px;color:#000;white-space:pre;left:248.83px;">28</div>
<div style="top:332.85px;font-size:11.3px;line-height:16px;color:#000;white-space:pre;left:309.64px;">90,000</div>
<div style="top:332.85px;font-size:11.3px;line-height:16px;color:#000;white-space:pre;left:354.9px;">Sales</div>
<div style="top:349.18px;font-size:11.3px;line-height:16px;color:#000;white-space:pre;left:98.63px;">16</div>
<div style="top:349.18px;font-size:11.3px;line-height:16px;color:#000;white-space:pre;left:121.3px;">Paul</div>
<div style="top:349.18px;font-size:11.3px;line-height:16px;color:#000;white-space:pre;left:248.83px;">37</div>
<div style="top:349.18px;font-size:11.3px;line-height:16px;color:#000;white-space:pre;left:303.35px;">130,000</div>
<div style="top:349.18px;font-size:11.3px;line-height:16px;color:#000;white-space:pre;left:354.9px;">Marketing</div>
<div style="top:365.51px;font-size:11.3px;line-height:16px;color:#000;white-space:pre;left:98.63px;">19</div>
<div style="top:365.51px;font-size:11.3px;line-height:16px;color:#000;white-space:pre;left:121.3px;">Steve</div>
<div style="top:365.51px;font-size:11.3px;line-height:16px;color:#000;white-space:pre;left:248.83px;">41</div>
<div style="top:365.51px;font-size:11.3px;line-height:16px;color:#000;white-space:pre;left:303.35px;">120,000</div>
<div style="top:365.51px;font-size:11.3px;line-height:16px;color:#000;white-space:pre;left:354.9px;">IT</div>
<div style="top:381.84px;font-size:11.3px;line-height:16px;color:#000;white-space:pre;left:104.92px;">2</div>
<div style="top:381.84px;font-size:11.3px;line-height:16px;color:#000;white-space:pre;left:121.3px;">Bob</div>
<div style="top:381.84px;font-size:11.3px;line-height:16px;color:#000;white-space:pre;left:248.83px;">40</div>
<div style="top:381.84px;font-size:11.3px;line-height:16px;color:#000;white-space:pre;left:309.64px;">85,000</div>
<div style="top:381.84px;font-size:11.3px;line-height:16px;color:#000;white-space:pre;left:354.9px;">Finance</div>
<div style="top:398.17px;font-size:11.3px;line-height:16px;color:#000;white-space:pre;left:104.92px;">3</div>
<div style="top:398.17px;font-size:11.3px;line-height:16px;color:#000;white-space:pre;left:121.3px;">Alice</div>
<div style="top:398.17px;font-size:11.3px;line-height:16px;color:#000;white-space:pre;left:248.83px;">30</div>
<div style="top:398.17px;font-size:11.3px;line-height:16px;color:#000;white-space:pre;left:309.64px;">70,000</div>
<div style="top:398.17px;font-size:11.3px;line-height:16px;color:#000;white-space:pre;left:354.9px;">HR</div>
<div style="top:414.50px;font-size:11.3px;line-height:16px;color:#000;white-space:pre;left:104.92px;">9</div>
<div style="top:414.50px;font-size:11.3px;line-height:16px;color:#000;white-space:pre;left:121.3px;">Olivia</div>
<div style="top:414.50px;font-size:11.3px;line-height:16px;color:#000;white-space:pre;left:248.83px;">30</div>
<div style="top:414.50px;font-size:11.3px;line-height:16px;color:#000;white-space:pre;left:309.64px;">60,000</div>
<div style="top:414.50px;font-size:11.3px;line-height:16px;color:#000;white-space:pre;left:354.9px;">IT</div>
<div style="top:430.83px;font-size:11.3px;line-height:16px;color:#000;white-space:pre;left:98.63px;">15</div>
<div style="top:430.83px;font-size:11.3px;line-height:16px;color:#000;white-space:pre;left:121.3px;">Olivia</div>
<div style="top:430.83px;font-size:11.3px;line-height:16px;color:#000;white-space:pre;left:248.83px;">35</div>
<div style="top:430.83px;font-size:11.3px;line-height:16px;color:#000;white-space:pre;left:309.64px;">85,000</div>
<div style="top:430.83px;font-size:11.3px;line-height:16px;color:#000;white-space:pre;left:354.9px;">IT</div>
<div style="left:5px;top:66.5px;width:15.5px;height:50.5px;background:#f2f2f2;border:1px solid #bcbcbc;border-radius:1px;"></div>
<div style="left:1.80px;top:76.50px;width:24.00px;height:16px;line-height:16px;font-size:11.3px;color:#000;white-space:pre;transform:rotate(-90deg);transform-origin:11.00px 8px;letter-spacing:0.163px;">Grid</div>
<svg style="left:7px;top:99px;" width="12" height="12" viewBox="0 0 12 12"><rect x="0" y="0" width="12" height="12" rx="1.8" fill="#3a8fd8"/><rect x="1.6" y="1.6" width="2.2" height="2.2" fill="#fff"/><rect x="4.9" y="1.6" width="2.2" height="2.2" fill="#fff"/><rect x="8.2" y="1.6" width="2.2" height="2.2" fill="#fff"/><rect x="1.6" y="4.9" width="2.2" height="2.2" fill="#fff"/><rect x="4.9" y="4.9" width="2.2" height="2.2" fill="#fff"/><rect x="8.2" y="4.9" width="2.2" height="2.2" fill="#fff"/><rect x="1.6" y="8.2" width="2.2" height="2.2" fill="#fff"/><rect x="4.9" y="8.2" width="2.2" height="2.2" fill="#fff"/><rect x="8.2" y="8.2" width="2.2" height="2.2" fill="#fff"/></svg>
<div style="left:3.10px;top:130.80px;width:21.40px;height:16px;line-height:16px;font-size:11.3px;color:#000;white-space:pre;transform:rotate(-90deg);transform-origin:9.70px 8px;letter-spacing:-0.331px;">Text</div>
<svg style="left:7.3px;top:149.8px;" width="10" height="14" viewBox="0 0 10 14"><path d="M3 0.9H1.7V9.1H3M1.7 5H9.2M9.2 3.4V6.6" stroke="#3a8fd8" stroke-width="1.3" fill="none"/><path d="M4.6 9.6L6.6 7.8L8.6 9.6M4.6 11.4L6.6 13.2L8.6 11.4" stroke="#3a8fd8" stroke-width="1" fill="none"/></svg>
<div style="left:-0.20px;top:186.00px;width:28.00px;height:16px;line-height:16px;font-size:11.3px;color:#000;white-space:pre;transform:rotate(-90deg);transform-origin:13.00px 8px;letter-spacing:-0.326px;">Chart</div>
<svg style="left:7.3px;top:210.5px;" width="11" height="11" viewBox="0 0 11 11"><path d="M5.5 5.5V0.4A5.1 5.1 0 1 1 0.4 5.5Z" fill="#3a8fd8"/><path d="M4.4 4.4V0A4.6 4.6 0 0 0 0 4.4Z" fill="#8fc0ee"/></svg>
<div style="left:-4.20px;top:582.30px;width:36.00px;height:16px;line-height:16px;font-size:11.3px;color:#000;white-space:pre;transform:rotate(-90deg);transform-origin:17.00px 8px;letter-spacing:-0.405px;">Record</div>
<svg style="left:6.5px;top:610.5px;" width="13" height="12" viewBox="0 0 13 12"><path d="M1 3.5Q1 2.3 2.2 2.3H6L7.2 3.5M1 3.5V10Q1 11.2 2.2 11.2H10Q11.2 11.2 11.2 10V6.5" stroke="#3a8fd8" stroke-width="1.2" fill="none"/><circle cx="10.3" cy="2.7" r="2.5" fill="#3a8fd8"/><rect x="8.8" y="2.2" width="3" height="1" fill="#cfe4f8"/></svg>
<svg style="left:28px;top:633px;" width="13" height="12" viewBox="0 0 13 12"><g stroke="#3a8fd8" stroke-width="1.15" fill="none"><path d="M2.2 6.3A3 3 0 0 1 7.4 3.6"/><path d="M5.8 1.6L7.7 3.7L5.4 4.9"/><path d="M10.8 5.7A3 3 0 0 1 5.6 8.4"/><path d="M7.2 10.4L5.3 8.3L7.6 7.1"/><path d="M8.2 2.2A3.2 3.2 0 0 1 11 5"/><path d="M4.8 9.8A3.2 3.2 0 0 1 2 7"/></g></svg>
<div style="top:631.00px;font-size:11.3px;line-height:16px;color:#767676;white-space:pre;letter-spacing:-0.267px;left:42.3px;">Refresh</div>
<svg style="left:84.2px;top:637.4000000000001px;" width="4.8" height="3.6" viewBox="0 0 4.8 3.6"><path d="M0 0H4.8L2.4 3.6Z" fill="#222"/></svg>
<div style="left:94.2px;top:633.4px;width:1.8px;height:1.7px;background:#b7ada1;"></div>
<div style="left:94.2px;top:636.6999999999999px;width:1.8px;height:1.7px;background:#b7ada1;"></div>
<div style="left:94.2px;top:640.0px;width:1.8px;height:1.7px;background:#b7ada1;"></div>
<div style="left:94.2px;top:643.3px;width:1.8px;height:1.7px;background:#b7ada1;"></div>
<svg style="left:101px;top:633.5px;" width="11.5" height="11.5" viewBox="0 0 11.5 11.5"><circle cx="5.75" cy="5.75" r="5" fill="none" stroke="#9ed3a3" stroke-width="1.1"/><path d="M3.2 5.9L5.1 7.7L8.4 4" stroke="#9ed3a3" stroke-width="1.1" fill="none"/></svg>
<div style="top:631.00px;font-size:11.3px;line-height:16px;color:#b4b4b4;white-space:pre;letter-spacing:-0.839px;left:115.5px;">Save</div>
<svg style="left:143px;top:638.5999999999999px;" width="3.6" height="2.4" viewBox="0 0 3.6 2.4"><path d="M0 0H3.6L1.8 2.4Z" fill="#c8c8c8"/></svg>
<svg style="left:153.5px;top:634px;" width="10.5" height="10.5" viewBox="0 0 10.5 10.5"><rect x="0.6" y="0.6" width="9.3" height="9.3" rx="1.3" fill="#fdecea" stroke="#ee9c95" stroke-width="1.1"/><path d="M3.2 3.2L7.3 7.3M7.3 3.2L3.2 7.3" stroke="#ee9c95" stroke-width="1.1"/></svg>
<div style="top:631.00px;font-size:11.3px;line-height:16px;color:#b4b4b4;white-space:pre;letter-spacing:-0.262px;left:167.1px;">Cancel</div>
<div style="left:205.89999999999998px;top:633.4px;width:1.8px;height:1.7px;background:#b7ada1;"></div>
<div style="left:205.89999999999998px;top:636.6999999999999px;width:1.8px;height:1.7px;background:#b7ada1;"></div>
<div style="left:205.89999999999998px;top:640.0px;width:1.8px;height:1.7px;background:#b7ada1;"></div>
<div style="left:205.89999999999998px;top:643.3px;width:1.8px;height:1.7px;background:#b7ada1;"></div>
<svg style="left:212px;top:634px;" width="13" height="11" viewBox="0 0 13 11"><path d="M0.5 1.5H11.5M0.5 4.8H8M0.5 8.1H5" stroke="#9cc6ec" stroke-width="1.3"/><path d="M6.5 10.4L7 8.4L10.6 4.8L12 6.2L8.4 9.8Z" fill="#9cc6ec"/></svg>
<svg style="left:230.3px;top:634px;" width="13" height="11" viewBox="0 0 13 11"><path d="M0.5 1.5H11.5M0.5 4.8H6M0.5 8.1H6" stroke="#9cc6ec" stroke-width="1.3"/><path d="M9.5 4V10.5M6.3 7.2H12.7" stroke="#8ed093" stroke-width="1.5"/></svg>
<svg style="left:248.5px;top:634px;" width="13" height="11" viewBox="0 0 13 11"><path d="M0.5 1.5H11.5M0.5 4.8H5M0.5 8.1H5" stroke="#9cc6ec" stroke-width="1.3"/><path d="M7.2 4.2Q5.8 7.2 7.2 10.2M11.3 4.2Q12.7 7.2 11.3 10.2" stroke="#9cc6ec" stroke-width="0.9" fill="none"/><path d="M9.25 5.4V9M7.5 7.2H11" stroke="#8ed093" stroke-width="1.2"/></svg>
<svg style="left:266px;top:634px;" width="13" height="11" viewBox="0 0 13 11"><path d="M0.5 1.5H11.5M0.5 4.8H6M0.5 8.1H6" stroke="#9cc6ec" stroke-width="1.3"/><path d="M7 7.2H12.8" stroke="#f0a29c" stroke-width="1.6"/></svg>
<div style="left:284.9px;top:633.4px;width:1.8px;height:1.7px;background:#b7ada1;"></div>
<div style="left:284.9px;top:636.6999999999999px;width:1.8px;height:1.7px;background:#b7ada1;"></div>
<div style="left:284.9px;top:640.0px;width:1.8px;height:1.7px;background:#b7ada1;"></div>
<div style="left:284.9px;top:643.3px;width:1.8px;height:1.7px;background:#b7ada1;"></div>
<svg style="left:292px;top:634px;" width="10" height="10" viewBox="0 0 10 10"><path d="M1 0.5V9.5" stroke="#8ec0ec" stroke-width="1.4"/><path d="M8.5 0.8L4.2 5L8.5 9.2" stroke="#8ec0ec" stroke-width="1.4" fill="none"/></svg>
<svg style="left:311px;top:634px;" width="7" height="10" viewBox="0 0 7 10"><path d="M5.8 0.8L1.5 5L5.8 9.2" stroke="#8ec0ec" stroke-width="1.4" fill="none"/></svg>
<svg style="left:328.5px;top:634px;" width="7" height="10" viewBox="0 0 7 10"><path d="M1.2 0.8L5.5 5L1.2 9.2" stroke="#2b86d9" stroke-width="1.6" fill="none"/></svg>
<svg style="left:345.5px;top:634px;" width="10" height="10" viewBox="0 0 10 10"><path d="M9 0.5V9.5" stroke="#2b86d9" stroke-width="1.6"/><path d="M1.5 0.8L5.8 5L1.5 9.2" stroke="#2b86d9" stroke-width="1.6" fill="none"/></svg>
<svg style="left:362.3px;top:633.5px;" width="13" height="11" viewBox="0 0 13 11"><path d="M3 0.6H1.8Q0.6 0.6 0.6 1.8V3M10 0.6H11.2Q12.4 0.6 12.4 1.8V3M3 10.4H1.8Q0.6 10.4 0.6 9.2V8M10 10.4H11.2Q12.4 10.4 12.4 9.2V8" stroke="#8ec0ec" stroke-width="1" fill="none"/><rect x="4" y="3" width="5" height="5" rx="0.8" fill="#b9d8f3"/><rect x="5.4" y="4.4" width="2.2" height="2.2" fill="#fff"/></svg>
<div style="left:382.9px;top:633.4px;width:1.8px;height:1.7px;background:#b7ada1;"></div>
<div style="left:382.9px;top:636.6999999999999px;width:1.8px;height:1.7px;background:#b7ada1;"></div>
<div style="left:382.9px;top:640.0px;width:1.8px;height:1.7px;background:#b7ada1;"></div>
<div style="left:382.9px;top:643.3px;width:1.8px;height:1.7px;background:#b7ada1;"></div>
<svg style="left:389.5px;top:632.5px;" width="11" height="12" viewBox="0 0 11 12"><path d="M5.5 0.3L8.7 4H6.5V8.6H4.5V4H2.3Z" fill="#2b86d9"/><path d="M0.8 7.6V10.3Q0.8 11.2 1.7 11.2H9.3Q10.2 11.2 10.2 10.3V7.6" stroke="#2b86d9" stroke-width="1.4" fill="none"/></svg>
<div style="top:631.00px;font-size:11.3px;line-height:16px;color:#767676;white-space:pre;letter-spacing:-0.243px;left:403.9px;">Export</div>
<div style="left:3px;top:647.3px;width:819px;height:2px;background:linear-gradient(#aaa,#ddd);"></div>
<svg style="left:805px;top:634px;" width="12" height="12" viewBox="0 0 12 12"><rect x="0.5" y="0.5" width="3.4" height="11" rx="0.8" fill="#2b86d9"/><rect x="5.2" y="7.5" width="6.3" height="4" rx="0.8" fill="#2b86d9"/><path d="M6 1.5Q10.5 1.5 10.5 6" stroke="#2b86d9" stroke-width="1.1" fill="none"/><path d="M7.6 0L5.6 1.5L7.6 3Z" fill="#2b86d9"/></svg>
<div style="left:569px;top:84px;width:70px;height:1.2px;background:linear-gradient(#c4c4c4,#e2e2e2);"></div>
<svg style="left:572.7px;top:69.3px;" width="12.5" height="12" viewBox="0 0 12.5 12"><rect x="0.7" y="0.7" width="11.1" height="9.6" rx="1.4" fill="#cfe6fa" stroke="#2b8fe0" stroke-width="1.3"/><rect x="0.7" y="0.7" width="11.1" height="3" fill="#2b8fe0"/><rect x="6.2" y="7.2" width="6" height="3.6" fill="#fff"/><path d="M6.8 9H8.6M9.6 9H11.6" stroke="#2b8fe0" stroke-width="1.1"/></svg>
<div style="top:68.00px;font-size:11.3px;line-height:16px;color:#000;white-space:pre;letter-spacing:-0.353px;left:589px;">Value</div>
<div style="left:638px;top:66.2px;width:85.5px;height:18.8px;background:linear-gradient(#a9cef3 0,#dfeaf7 12%,#ececec 30%,#ececec);border:1px solid #c6c6c6;border-bottom:none;border-radius:4px 4px 0 0;"></div>
<svg style="left:641.5px;top:70.2px;" width="11.5" height="11.5" viewBox="0 0 12 12"><circle cx="6" cy="6" r="5.2" fill="#e6f1fc" stroke="#2b8fe0" stroke-width="1.1"/><rect x="3.6" y="3.6" width="1.9" height="1.9" rx="0.5" fill="#2b8fe0"/><rect x="6.5" y="3.6" width="1.9" height="1.9" rx="0.5" fill="#2b8fe0"/><rect x="3.6" y="6.5" width="1.9" height="1.9" rx="0.5" fill="#2b8fe0"/><rect x="6.5" y="6.5" width="1.9" height="1.9" rx="0.5" fill="#2b8fe0"/></svg>
<div style="top:68.00px;font-size:11.3px;line-height:16px;color:#000;white-space:pre;letter-spacing:-0.298px;left:657.6px;">Grouping</div>
<svg style="left:709.6px;top:72px;" width="8.5" height="8.5" viewBox="0 0 8.5 8.5"><path d="M0.7 0.7L7.8 7.8M7.8 0.7L0.7 7.8" stroke="#222" stroke-width="1.1" fill="none"/></svg>
<svg style="left:785px;top:70px;" width="9.5" height="4" viewBox="0 0 9.5 4"><rect x="0.6" y="0.6" width="8.3" height="2.6" rx="0.6" fill="#fff" stroke="#111" stroke-width="1.2"/></svg>
<svg style="left:787.2px;top:8.3px;" width="9.5" height="4" viewBox="0 0 9.5 4"><rect x="0.6" y="0.6" width="8.3" height="2.4" rx="0.6" fill="#fff" stroke="#111" stroke-width="1.2"/></svg>
<svg style="left:804.8px;top:8.3px;" width="9.5" height="9.5" viewBox="0 0 9.5 9.5"><rect x="0.6" y="0.6" width="8.3" height="8.1" rx="0.8" fill="#fff" stroke="#222" stroke-width="1"/><rect x="0.6" y="0.6" width="8.3" height="1.6" fill="#222"/></svg>
<svg style="left:681px;top:88px;" width="13" height="12.5" viewBox="0 0 13 12.5"><path d="M1.7 9V1.6M0.2 3.2L1.7 1.2L3.2 3.2" stroke="#2b8fe0" stroke-width="1.1" fill="none"/><path d="M4.9 4.2V11M3.4 9.4L4.9 11.4L6.4 9.4" stroke="#2b8fe0" stroke-width="1.1" fill="none"/><circle cx="9.3" cy="5.7" r="1.5" fill="none" stroke="#43a852" stroke-width="1.3"/><path d="M9.3 3.3V8.1M6.9 5.7H11.7M7.6 4L11 7.4M11 4L7.6 7.4" stroke="#43a852" stroke-width="0.8"/></svg>
<svg style="left:696px;top:92.6px;" width="4.4" height="2.8" viewBox="0 0 4.4 2.8"><path d="M0 0H4.4L2.2 2.8Z" fill="#222"/></svg>
<svg style="left:705.3px;top:88px;" width="11.5" height="11.5" viewBox="0 0 11.5 11.5"><rect x="0.8" y="1.8" width="9.4" height="8.8" rx="1.2" fill="#eef6fd" stroke="#2b8fe0" stroke-width="1" stroke-dasharray="3.2 0.9"/><path d="M1 1.8L10.2 10.6" stroke="#2b8fe0" stroke-width="1"/><path d="M3 0.4V2.4M5.5 0.4V2.4M8 0.4V2.4" stroke="#2b8fe0" stroke-width="0.8"/></svg>
<div style="left:722.5px;top:86px;width:1px;height:17px;background:#e4e4e4;"></div>
<svg style="left:729px;top:88.5px;" width="10" height="10" viewBox="0 0 10 10"><path d="M5 0.3V9.7M0.3 5H9.7" stroke="#2f9e3d" stroke-width="1.7"/></svg>
<svg style="left:748px;top:88px;" width="9" height="11" viewBox="0 0 9 11"><path d="M3 0.4H6V1.4H8.6V2.6H0.4V1.4H3Z" fill="#cdcdcd"/><path d="M1 3.2H8L7.5 10.6H1.5Z" fill="#cdcdcd"/></svg>
<div style="left:763.3px;top:86px;width:1px;height:17px;background:#e4e4e4;"></div>
<svg style="left:769.3px;top:88px;" width="11.2" height="11.2" viewBox="0 0 11.2 11.2"><rect x="0.7" y="0.7" width="9.8" height="9.8" rx="1.3" fill="#f7c3be" stroke="#e2453a" stroke-width="1.3"/><path d="M3.4 3.4L7.8 7.8M7.8 3.4L3.4 7.8" stroke="#e2453a" stroke-width="1.3"/></svg>
<svg style="left:791.4px;top:88.4px;" width="4.4" height="4.4" viewBox="0 0 4.4 4.4"><circle cx="2.2" cy="2.2" r="1.45" fill="#fff" stroke="#3a3a3a" stroke-width="0.95"/></svg>
<svg style="left:791.4px;top:92.05000000000001px;" width="4.4" height="4.4" viewBox="0 0 4.4 4.4"><circle cx="2.2" cy="2.2" r="1.45" fill="#fff" stroke="#3a3a3a" stroke-width="0.95"/></svg>
<svg style="left:791.4px;top:95.7px;" width="4.4" height="4.4" viewBox="0 0 4.4 4.4"><circle cx="2.2" cy="2.2" r="1.45" fill="#fff" stroke="#3a3a3a" stroke-width="0.95"/></svg>
<div style="left:571px;top:106.2px;width:224px;height:17px;border:1px solid #e2e2e2;border-radius:3px;"></div>
<svg style="left:573.2px;top:108.5px;" width="12" height="12" viewBox="0 0 12 12"><g stroke="#585858" stroke-width="1.15" fill="none"><path d="M0.8 3.8V0.8H3.8M0.8 0.8L4 4"/><path d="M11.2 3.8V0.8H8.2M11.2 0.8L8 4"/><path d="M0.8 8.2V11.2H3.8M0.8 11.2L4 8"/><path d="M11.2 8.2V11.2H8.2M11.2 11.2L8 8"/></g></svg>
<div style="top:105.70px;font-size:11.3px;line-height:16px;color:#9a9a9a;white-space:pre;letter-spacing:-0.129px;font-style:italic;left:588.5px;">Enter a SQL expression to filter res</div>
<svg style="left:765px;top:110px;" width="5" height="9" viewBox="0 0 5 9"><path d="M0 0L4.6 4.5L0 9Z" fill="#8a8a8a"/></svg>
<div style="left:777.5px;top:108.5px;width:1px;height:12px;background:#8a8a8a;"></div>
<svg style="left:781px;top:112px;" width="9" height="5.2" viewBox="0 0 9 5.2"><path d="M0 0H9L4.5 5.2Z" fill="#8a8a8a"/></svg>
<div style="left:803.2px;top:66.5px;width:16px;height:62.5px;background:#f2f2f2;border:1px solid #b4b4b4;border-radius:2px;"></div>
<svg style="left:805px;top:71.5px;" width="12.5" height="12.5" viewBox="0 0 12.5 12.5"><rect x="0.7" y="0.7" width="11.1" height="11.1" rx="1.4" fill="#8ec3f2" stroke="#2b8fe0" stroke-width="1.2"/><rect x="4.5" y="0.7" width="7.3" height="6.5" fill="#2b8fe0"/><rect x="0.2" y="7.6" width="5" height="4.8" fill="#fff"/><circle cx="2.6" cy="10" r="1.5" fill="none" stroke="#2b8fe0" stroke-width="1"/></svg>
<div style="left:795.20px;top:95.40px;width:34.20px;height:16px;line-height:16px;font-size:11.3px;color:#000;white-space:pre;transform:rotate(90deg);transform-origin:16.10px 8px;letter-spacing:-0.392px;">Panels</div>
<svg style="left:805px;top:133.7px;" width="11.4" height="11.4" viewBox="0 0 11.4 11.4"><rect x="0" y="0" width="5.1" height="5.1" rx="1" fill="#2b8fe0"/><rect x="6.2" y="0" width="5.1" height="5.1" rx="1" fill="#2b8fe0"/><rect x="0" y="6.2" width="5.1" height="5.1" rx="1" fill="#2b8fe0"/><rect x="6.2" y="6.2" width="5.1" height="5.1" rx="1" fill="#f0901a"/><path d="M1.4 2.55H3.7M7.6 2.55H9.9M8.75 1.4V3.7M7.6 8.75H9.9" stroke="#cfe6fa" stroke-width="0.9"/><path d="M2 7.6L3.6 8.75L2 9.9Z" fill="#cfe6fa"/></svg>
<div style="left:803.8px;top:149.5px;width:14.7px;height:15.5px;background:#f0f0f0;border:1px solid #b8b8b8;"></div>
<svg style="left:805.3px;top:151.4px;" width="11.6" height="11.6" viewBox="0 0 12 12"><circle cx="6" cy="6" r="5.2" fill="#e6f1fc" stroke="#2b8fe0" stroke-width="1.1"/><rect x="3.6" y="3.6" width="1.9" height="1.9" rx="0.5" fill="#2b8fe0"/><rect x="6.5" y="3.6" width="1.9" height="1.9" rx="0.5" fill="#2b8fe0"/><rect x="3.6" y="6.5" width="1.9" height="1.9" rx="0.5" fill="#2b8fe0"/><rect x="6.5" y="6.5" width="1.9" height="1.9" rx="0.5" fill="#2b8fe0"/></svg>
<svg style="left:805px;top:169px;" width="12" height="12" viewBox="0 0 12 12"><rect x="0.6" y="1" width="10.8" height="10.4" rx="1.2" fill="#fff" stroke="#2b8fe0" stroke-width="1.2"/><rect x="0.6" y="1" width="10.8" height="5.4" fill="#2b8fe0"/><path d="M2.4 2.6H3.6M4.8 2.6H6M7.2 2.6H8.4M2.4 4.6H3.6M4.8 4.6H6M7.2 4.6H8.4" stroke="#bfe0fb" stroke-width="1"/></svg>
<svg style="left:805px;top:186px;" width="12" height="13.5" viewBox="0 0 12 13.5"><rect x="0.3" y="5" width="11.4" height="8.2" rx="0.9" fill="#2b8fe0"/><path d="M0.3 7.9H11.7M0.3 10.4H11.7M3.3 5.6V13.2M8.7 5.6V13.2" stroke="#e8f3fd" stroke-width="0.8"/><rect x="4.8" y="3" width="2.4" height="10.2" fill="#f39a1e" fill-opacity="0.85"/><path d="M6 0.2L7.8 2.8H4.2Z" fill="#f39a1e"/></svg>
<div style="left:803.8px;top:202.6px;width:14.7px;height:16.2px;background:#f0f0f0;border:1px solid #b8b8b8;"></div>
<svg style="left:805.2px;top:204.8px;" width="12" height="12" viewBox="0 0 12.5 12"><rect x="0.7" y="0.7" width="11.1" height="9.6" rx="1.4" fill="#cfe6fa" stroke="#2b8fe0" stroke-width="1.3"/><rect x="0.7" y="0.7" width="11.1" height="3" fill="#2b8fe0"/><rect x="6.2" y="7.2" width="6" height="3.6" fill="#fff"/><path d="M6.8 9H8.6M9.6 9H11.6" stroke="#2b8fe0" stroke-width="1.1"/></svg>
<div style="left:587px;top:126.3px;width:215px;height:22.60000000000001px;background:#ececec;"></div>
<div style="left:620.5px;top:148.9px;width:152.2px;height:16.29px;background:#dbe5f2;"></div>
<div style="left:620.5px;top:181.48000000000002px;width:152.2px;height:16.29px;background:#dbe5f2;"></div>
<div style="left:620.5px;top:214.06px;width:152.2px;height:16.29px;background:#dbe5f2;"></div>
<div style="left:620.5px;top:246.64px;width:152.2px;height:16.29px;background:#dbe5f2;"></div>
<div style="left:620.5px;top:279.22px;width:152.2px;height:16.29px;background:#dbe5f2;"></div>
<div style="left:620.5px;top:164.5px;width:181.5px;height:1px;background:#f3f3f3;"></div>
<div style="left:620.5px;top:180.5px;width:181.5px;height:1px;background:#f3f3f3;"></div>
<div style="left:620.5px;top:197.5px;width:181.5px;height:1px;background:#f3f3f3;"></div>
<div style="left:620.5px;top:213.5px;width:181.5px;height:1px;background:#f3f3f3;"></div>
<div style="left:620.5px;top:229.5px;width:181.5px;height:1px;background:#f3f3f3;"></div>
<div style="left:620.5px;top:246.5px;width:181.5px;height:1px;background:#f3f3f3;"></div>
<div style="left:620.5px;top:262.5px;width:181.5px;height:1px;background:#f3f3f3;"></div>
<div style="left:620.5px;top:278.5px;width:181.5px;height:1px;background:#f3f3f3;"></div>
<div style="left:620.5px;top:295.5px;width:181.5px;height:1px;background:#f3f3f3;"></div>
<div style="left:620.5px;top:311.5px;width:181.5px;height:1px;background:#f3f3f3;"></div>
<div style="left:620.5px;top:327.5px;width:181.5px;height:1px;background:#f3f3f3;"></div>
<div style="left:620.5px;top:343.5px;width:181.5px;height:1px;background:#f3f3f3;"></div>
<div style="left:620.5px;top:360.5px;width:181.5px;height:1px;background:#f3f3f3;"></div>
<div style="left:620.5px;top:376.5px;width:181.5px;height:1px;background:#f3f3f3;"></div>
<div style="left:620.5px;top:392.5px;width:181.5px;height:1px;background:#f3f3f3;"></div>
<div style="left:620.5px;top:409.5px;width:181.5px;height:1px;background:#f3f3f3;"></div>
<div style="left:620.5px;top:425.5px;width:181.5px;height:1px;background:#f3f3f3;"></div>
<div style="left:620.5px;top:441.5px;width:181.5px;height:1px;background:#f3f3f3;"></div>
<div style="left:620.5px;top:457.5px;width:181.5px;height:1px;background:#f3f3f3;"></div>
<div style="left:620.5px;top:474.5px;width:181.5px;height:1px;background:#f3f3f3;"></div>
<div style="left:620.5px;top:490.5px;width:181.5px;height:1px;background:#f3f3f3;"></div>
<div style="left:620.5px;top:506.5px;width:181.5px;height:1px;background:#f3f3f3;"></div>
<div style="left:620.5px;top:523.5px;width:181.5px;height:1px;background:#f3f3f3;"></div>
<div style="left:620.5px;top:539.5px;width:181.5px;height:1px;background:#f3f3f3;"></div>
<div style="left:620.5px;top:555.5px;width:181.5px;height:1px;background:#f3f3f3;"></div>
<div style="left:620.5px;top:571.5px;width:181.5px;height:1px;background:#f3f3f3;"></div>
<div style="left:620.5px;top:588.5px;width:181.5px;height:1px;background:#f3f3f3;"></div>
<div style="left:620.5px;top:604.5px;width:181.5px;height:1px;background:#f3f3f3;"></div>
<div style="left:620.5px;top:620.5px;width:181.5px;height:1px;background:#f3f3f3;"></div>
<div style="left:691.2px;top:148.9px;width:1px;height:479.1px;background:#f1f1f1;"></div>
<div style="left:772.2px;top:148.9px;width:1px;height:479.1px;background:#f1f1f1;"></div>
<div style="left:620.5px;top:126.3px;width:71.20000000000005px;height:22.60000000000001px;background:#d3e5f8;border-right:1px solid #4a4a4a;"></div>
<div style="top:129.60px;font-size:8.7px;line-height:16px;color:#2b7fd0;white-space:pre;letter-spacing:-0.372px;left:624.9000000000001px;-webkit-text-stroke:0.35px #2b7fd0;">123</div>
<div style="top:129.80px;font-size:11.3px;line-height:16px;color:#000;white-space:pre;letter-spacing:-0.218px;left:641.0px;">age</div>
<svg style="left:678.2px;top:135.49999999999997px;" width="8.6" height="4.6" viewBox="0 0 8.6 4.6"><path d="M0 0H8.6L4.3 4.6Z" fill="#2b8fe0"/></svg>
<div style="left:691.7px;top:126.3px;width:81.0px;height:22.60000000000001px;background:#ececec;border-right:1px solid #4a4a4a;"></div>
<div style="top:129.60px;font-size:8.7px;line-height:16px;color:#2b7fd0;white-space:pre;letter-spacing:-0.372px;left:696.1000000000001px;-webkit-text-stroke:0.35px #2b7fd0;">123</div>
<div style="top:129.80px;font-size:11.3px;line-height:16px;color:#000;white-space:pre;letter-spacing:0.111px;left:712.2px;">count</div>
<svg style="left:759.2px;top:135.49999999999997px;" width="8.6" height="4.6" viewBox="0 0 8.6 4.6"><path d="M0 0H8.6L4.3 4.6Z" fill="#2b8fe0"/></svg>
<div style="left:620.0px;top:126.3px;width:1px;height:22.60000000000001px;background:#4a4a4a;"></div>
<div style="left:620.8px;top:148.70000000000002px;width:71px;height:17.09px;background:#dbe5f2;border:1.5px solid #1a1a1a;"></div>
<div style="top:149.00px;font-size:11.3px;line-height:16px;color:#000;white-space:pre;left:673.23px;">40</div>
<div style="top:149.00px;font-size:11.3px;line-height:16px;color:#000;white-space:pre;left:760.92px;">2</div>
<div style="top:165.29px;font-size:11.3px;line-height:16px;color:#000;white-space:pre;left:673.23px;">30</div>
<div style="top:165.29px;font-size:11.3px;line-height:16px;color:#000;white-space:pre;left:760.92px;">5</div>
<div style="top:181.58px;font-size:11.3px;line-height:16px;color:#000;white-space:pre;left:673.23px;">37</div>
<div style="top:181.58px;font-size:11.3px;line-height:16px;color:#000;white-space:pre;left:760.92px;">1</div>
<div style="top:197.87px;font-size:11.3px;line-height:16px;color:#000;white-space:pre;left:673.23px;">28</div>
<div style="top:197.87px;font-size:11.3px;line-height:16px;color:#000;white-space:pre;left:760.92px;">2</div>
<div style="top:214.16px;font-size:11.3px;line-height:16px;color:#000;white-space:pre;left:673.23px;">35</div>
<div style="top:214.16px;font-size:11.3px;line-height:16px;color:#000;white-space:pre;left:760.92px;">3</div>
<div style="top:230.45px;font-size:11.3px;line-height:16px;color:#000;white-space:pre;left:673.23px;">39</div>
<div style="top:230.45px;font-size:11.3px;line-height:16px;color:#000;white-space:pre;left:760.92px;">1</div>
<div style="top:246.74px;font-size:11.3px;line-height:16px;color:#000;white-space:pre;left:673.23px;">50</div>
<div style="top:246.74px;font-size:11.3px;line-height:16px;color:#000;white-space:pre;left:760.92px;">1</div>
<div style="top:263.03px;font-size:11.3px;line-height:16px;color:#000;white-space:pre;left:673.23px;">41</div>
<div style="top:263.03px;font-size:11.3px;line-height:16px;color:#000;white-space:pre;left:760.92px;">2</div>
<div style="top:279.32px;font-size:11.3px;line-height:16px;color:#000;white-space:pre;left:673.23px;">25</div>
<div style="top:279.32px;font-size:11.3px;line-height:16px;color:#000;white-space:pre;left:760.92px;">2</div>
<div style="top:295.61px;font-size:11.3px;line-height:16px;color:#000;white-space:pre;left:673.23px;">27</div>
<div style="top:295.61px;font-size:11.3px;line-height:16px;color:#000;white-space:pre;left:760.92px;">3</div>
<div style="left:588.6px;top:148.9px;width:31.9px;height:16.79px;background:#ececec;"></div>
<div style="left:588.6px;top:165.19px;width:31.9px;height:16.79px;background:#ececec;"></div>
<div style="left:588.6px;top:181.48000000000002px;width:31.9px;height:16.79px;background:#ececec;"></div>
<div style="left:588.6px;top:197.77px;width:31.9px;height:16.79px;background:#ececec;"></div>
<div style="left:588.6px;top:214.06px;width:31.9px;height:16.79px;background:#ececec;"></div>
<div style="left:588.6px;top:230.35px;width:31.9px;height:16.79px;background:#ececec;"></div>
<div style="left:588.6px;top:246.64px;width:31.9px;height:16.79px;background:#ececec;"></div>
<div style="left:588.6px;top:262.93px;width:31.9px;height:16.79px;background:#ececec;"></div>
<div style="left:588.6px;top:279.22px;width:31.9px;height:16.79px;background:#ececec;"></div>
<div style="left:588.6px;top:295.51px;width:31.9px;height:16.79px;background:#ececec;"></div>
<div style="left:588.6px;top:164.15px;width:31.9px;height:1.7px;background:#585858;"></div>
<div style="left:588.6px;top:165.85px;width:31.9px;height:0.8px;background:#f8f8f8;"></div>
<div style="top:148.90px;font-size:11.3px;line-height:16px;color:#000;white-space:pre;left:592.0px;">1</div>
<div style="left:588.6px;top:180.15px;width:31.9px;height:1.7px;background:#585858;"></div>
<div style="left:588.6px;top:181.85px;width:31.9px;height:0.8px;background:#f8f8f8;"></div>
<div style="top:165.19px;font-size:11.3px;line-height:16px;color:#000;white-space:pre;left:592.0px;">2</div>
<div style="left:588.6px;top:197.15px;width:31.9px;height:1.7px;background:#585858;"></div>
<div style="left:588.6px;top:198.85px;width:31.9px;height:0.8px;background:#f8f8f8;"></div>
<div style="top:181.48px;font-size:11.3px;line-height:16px;color:#000;white-space:pre;left:592.0px;">3</div>
<div style="left:588.6px;top:213.15px;width:31.9px;height:1.7px;background:#585858;"></div>
<div style="left:588.6px;top:214.85px;width:31.9px;height:0.8px;background:#f8f8f8;"></div>
<div style="top:197.77px;font-size:11.3px;line-height:16px;color:#000;white-space:pre;left:592.0px;">4</div>
<div style="left:588.6px;top:229.15px;width:31.9px;height:1.7px;background:#585858;"></div>
<div style="left:588.6px;top:230.85px;width:31.9px;height:0.8px;background:#f8f8f8;"></div>
<div style="top:214.06px;font-size:11.3px;line-height:16px;color:#000;white-space:pre;left:592.0px;">5</div>
<div style="left:588.6px;top:246.15px;width:31.9px;height:1.7px;background:#585858;"></div>
<div style="left:588.6px;top:247.85px;width:31.9px;height:0.8px;background:#f8f8f8;"></div>
<div style="top:230.35px;font-size:11.3px;line-height:16px;color:#000;white-space:pre;left:592.0px;">6</div>
<div style="left:588.6px;top:262.15px;width:31.9px;height:1.7px;background:#585858;"></div>
<div style="left:588.6px;top:263.85px;width:31.9px;height:0.8px;background:#f8f8f8;"></div>
<div style="top:246.64px;font-size:11.3px;line-height:16px;color:#000;white-space:pre;left:592.0px;">7</div>
<div style="left:588.6px;top:278.15px;width:31.9px;height:1.7px;background:#585858;"></div>
<div style="left:588.6px;top:279.85px;width:31.9px;height:0.8px;background:#f8f8f8;"></div>
<div style="top:262.93px;font-size:11.3px;line-height:16px;color:#000;white-space:pre;left:592.0px;">8</div>
<div style="left:588.6px;top:295.15px;width:31.9px;height:1.7px;background:#585858;"></div>
<div style="left:588.6px;top:296.85px;width:31.9px;height:0.8px;background:#f8f8f8;"></div>
<div style="top:279.22px;font-size:11.3px;line-height:16px;color:#000;white-space:pre;left:592.0px;">9</div>
<div style="left:588.6px;top:311.15px;width:31.9px;height:1.7px;background:#585858;"></div>
<div style="top:295.51px;font-size:11.3px;line-height:16px;color:#000;white-space:pre;left:592.0px;">10</div>
<div style="left:619.8px;top:148.9px;width:1.2px;height:164.89999999999998px;background:#3a3a3a;"></div>
<div style="left:588.6px;top:148.3px;width:184px;height:1.3px;background:#444;"></div>
<div style="left:571px;top:126.3px;width:15.7px;height:52px;background:#f2f2f2;border:1px solid #bcbcbc;border-radius:1px;"></div>
<div style="left:567.80px;top:138.20px;width:24.00px;height:16px;line-height:16px;font-size:11.3px;color:#000;white-space:pre;transform:rotate(-90deg);transform-origin:11.00px 8px;letter-spacing:0.163px;">Grid</div>
<svg style="left:573px;top:159px;" width="12" height="12" viewBox="0 0 12 12"><rect x="0" y="0" width="12" height="12" rx="1.8" fill="#3a8fd8"/><rect x="1.6" y="1.6" width="2.2" height="2.2" fill="#fff"/><rect x="4.9" y="1.6" width="2.2" height="2.2" fill="#fff"/><rect x="8.2" y="1.6" width="2.2" height="2.2" fill="#fff"/><rect x="1.6" y="4.9" width="2.2" height="2.2" fill="#fff"/><rect x="4.9" y="4.9" width="2.2" height="2.2" fill="#fff"/><rect x="8.2" y="4.9" width="2.2" height="2.2" fill="#fff"/><rect x="1.6" y="8.2" width="2.2" height="2.2" fill="#fff"/><rect x="4.9" y="8.2" width="2.2" height="2.2" fill="#fff"/><rect x="8.2" y="8.2" width="2.2" height="2.2" fill="#fff"/></svg>
<div style="left:568.80px;top:190.60px;width:22.00px;height:16px;line-height:16px;font-size:11.3px;color:#000;white-space:pre;transform:rotate(-90deg);transform-origin:10.00px 8px;letter-spacing:-0.181px;">Text</div>
<svg style="left:573.5px;top:211.2px;" width="10" height="14" viewBox="0 0 10 14"><path d="M3 0.9H1.7V9.1H3M1.7 5H9.2M9.2 3.4V6.6" stroke="#3a8fd8" stroke-width="1.3" fill="none"/><path d="M4.6 9.6L6.6 7.8L8.6 9.6M4.6 11.4L6.6 13.2L8.6 11.4" stroke="#3a8fd8" stroke-width="1" fill="none"/></svg>
<div style="left:437px;top:226.7px;width:218.8px;height:438px;background:#ececec;border-radius:5px;box-shadow:0 0 0 0.5px rgba(0,0,0,0.13),0 5px 14px rgba(0,0,0,0.2),0 0 3px rgba(0,0,0,0.1);"></div>
<div style="left:441px;top:526.3px;width:211.3px;height:18px;background:#4c97f7;border-radius:4px;"></div>
<div style="top:231.80px;font-size:11.4px;line-height:16px;color:#1f1f1f;white-space:pre;letter-spacing:-0.303px;left:466.4px;-webkit-text-stroke:0.35px;">Copy</div>
<div style="top:250.00px;font-size:11.4px;line-height:16px;color:#1f1f1f;white-space:pre;letter-spacing:-0.260px;left:448.4px;-webkit-text-stroke:0.35px;">Advanced Copy</div>
<svg style="left:638.6px;top:253.8px;" width="6" height="8.4" viewBox="0 0 6 8.4"><path d="M1 0.8L4.6 4.2L1 7.6" stroke="#1a1a1a" stroke-width="1.5" fill="none" stroke-linecap="round" stroke-linejoin="round"/></svg>
<div style="top:268.10px;font-size:11.4px;line-height:16px;color:#1f1f1f;white-space:pre;letter-spacing:-0.470px;left:466.4px;-webkit-text-stroke:0.35px;">Paste</div>
<div style="top:285.80px;font-size:11.4px;line-height:16px;color:#1f1f1f;white-space:pre;letter-spacing:-0.272px;left:448.4px;-webkit-text-stroke:0.35px;">Advanced Paste ...</div>
<div style="left:448.4px;top:306.8px;width:196.6px;height:1px;background:#d4d4d4;"></div>
<div style="top:312.40px;font-size:11.4px;line-height:16px;color:#1f1f1f;white-space:pre;letter-spacing:-0.189px;left:466.4px;-webkit-text-stroke:0.35px;">Filter</div>
<svg style="left:638.6px;top:316.2px;" width="6" height="8.4" viewBox="0 0 6 8.4"><path d="M1 0.8L4.6 4.2L1 7.6" stroke="#1a1a1a" stroke-width="1.5" fill="none" stroke-linecap="round" stroke-linejoin="round"/></svg>
<div style="top:312.70px;font-size:8px;line-height:16px;color:#b3b3b3;white-space:pre;letter-spacing:-0.397px;left:620.60px;">F11</div>
<div style="top:330.60px;font-size:11.4px;line-height:16px;color:#1f1f1f;white-space:pre;letter-spacing:-0.348px;left:460px;-webkit-text-stroke:0.35px;">Order</div>
<svg style="left:638.6px;top:334.40000000000003px;" width="6" height="8.4" viewBox="0 0 6 8.4"><path d="M1 0.8L4.6 4.2L1 7.6" stroke="#1a1a1a" stroke-width="1.5" fill="none" stroke-linecap="round" stroke-linejoin="round"/></svg>
<div style="top:348.80px;font-size:11.4px;line-height:16px;color:#1f1f1f;white-space:pre;letter-spacing:-0.199px;left:448.4px;-webkit-text-stroke:0.35px;">Navigate</div>
<svg style="left:638.6px;top:352.6px;" width="6" height="8.4" viewBox="0 0 6 8.4"><path d="M1 0.8L4.6 4.2L1 7.6" stroke="#1a1a1a" stroke-width="1.5" fill="none" stroke-linecap="round" stroke-linejoin="round"/></svg>
<div style="left:448.4px;top:369.5px;width:196.6px;height:1px;background:#d4d4d4;"></div>
<div style="top:375.40px;font-size:11.4px;line-height:16px;color:#1f1f1f;white-space:pre;letter-spacing:-0.311px;left:466.4px;-webkit-text-stroke:0.35px;">Edit</div>
<svg style="left:638.6px;top:379.2px;" width="6" height="8.4" viewBox="0 0 6 8.4"><path d="M1 0.8L4.6 4.2L1 7.6" stroke="#1a1a1a" stroke-width="1.5" fill="none" stroke-linecap="round" stroke-linejoin="round"/></svg>
<div style="left:448.4px;top:395.8px;width:196.6px;height:1px;background:#d4d4d4;"></div>
<div style="top:402.20px;font-size:11.4px;line-height:16px;color:#1f1f1f;white-space:pre;letter-spacing:-0.270px;left:448.4px;-webkit-text-stroke:0.35px;">View/Format</div>
<svg style="left:638.6px;top:406.0px;" width="6" height="8.4" viewBox="0 0 6 8.4"><path d="M1 0.8L4.6 4.2L1 7.6" stroke="#1a1a1a" stroke-width="1.5" fill="none" stroke-linecap="round" stroke-linejoin="round"/></svg>
<div style="top:420.20px;font-size:11.4px;line-height:16px;color:#1f1f1f;white-space:pre;letter-spacing:-0.055px;left:448.4px;-webkit-text-stroke:0.35px;">Logical structure</div>
<svg style="left:638.6px;top:424.0px;" width="6" height="8.4" viewBox="0 0 6 8.4"><path d="M1 0.8L4.6 4.2L1 7.6" stroke="#1a1a1a" stroke-width="1.5" fill="none" stroke-linecap="round" stroke-linejoin="round"/></svg>
<div style="top:438.10px;font-size:11.4px;line-height:16px;color:#1f1f1f;white-space:pre;letter-spacing:-0.271px;left:448.4px;-webkit-text-stroke:0.35px;">Layout</div>
<svg style="left:638.6px;top:441.90000000000003px;" width="6" height="8.4" viewBox="0 0 6 8.4"><path d="M1 0.8L4.6 4.2L1 7.6" stroke="#1a1a1a" stroke-width="1.5" fill="none" stroke-linecap="round" stroke-linejoin="round"/></svg>
<div style="left:448.4px;top:458.4px;width:196.6px;height:1px;background:#d4d4d4;"></div>
<div style="top:465.30px;font-size:11.4px;line-height:16px;color:#1f1f1f;white-space:pre;letter-spacing:-0.137px;left:466.4px;-webkit-text-stroke:0.35px;">Export data</div>
<div style="top:483.10px;font-size:11.4px;line-height:16px;color:#1f1f1f;white-space:pre;letter-spacing:-0.136px;left:448.4px;-webkit-text-stroke:0.35px;">Open with</div>
<svg style="left:638.6px;top:486.90000000000003px;" width="6" height="8.4" viewBox="0 0 6 8.4"><path d="M1 0.8L4.6 4.2L1 7.6" stroke="#1a1a1a" stroke-width="1.5" fill="none" stroke-linecap="round" stroke-linejoin="round"/></svg>
<div style="left:448.4px;top:503.5px;width:196.6px;height:1px;background:#d4d4d4;"></div>
<div style="top:509.40px;font-size:11.4px;line-height:16px;color:#1f1f1f;white-space:pre;letter-spacing:-0.468px;left:466.4px;-webkit-text-stroke:0.35px;">Generate SQL</div>
<svg style="left:638.6px;top:513.1999999999999px;" width="6" height="8.4" viewBox="0 0 6 8.4"><path d="M1 0.8L4.6 4.2L1 7.6" stroke="#1a1a1a" stroke-width="1.5" fill="none" stroke-linecap="round" stroke-linejoin="round"/></svg>
<div style="top:527.40px;font-size:11.4px;line-height:16px;color:#fff;white-space:pre;letter-spacing:-0.234px;left:466.4px;-webkit-text-stroke:0.35px;">Create Dataset</div>
<div style="top:545.60px;font-size:11.4px;line-height:16px;color:#1f1f1f;white-space:pre;letter-spacing:-0.260px;left:466.4px;-webkit-text-stroke:0.35px;">Generate Mock Data</div>
<div style="left:448.4px;top:566.3px;width:196.6px;height:1px;background:#d4d4d4;"></div>
<div style="top:572.20px;font-size:11.4px;line-height:16px;color:#1f1f1f;white-space:pre;letter-spacing:-0.374px;left:466.4px;-webkit-text-stroke:0.35px;">Refresh</div>
<div style="top:572.50px;font-size:8.5px;line-height:16px;color:#b3b3b3;white-space:pre;letter-spacing:-0.210px;left:634.29px;">F5</div>
<div style="top:590.30px;font-size:11.4px;line-height:16px;color:#1f1f1f;white-space:pre;letter-spacing:-0.128px;left:466.4px;-webkit-text-stroke:0.35px;">Edit grouping columns</div>
<div style="top:608.10px;font-size:11.4px;line-height:16px;color:#b4b4b4;white-space:pre;letter-spacing:-0.237px;left:466.4px;-webkit-text-stroke:0.35px;">Remove grouping column</div>
<div style="top:626.10px;font-size:11.4px;line-height:16px;color:#1f1f1f;white-space:pre;letter-spacing:-0.177px;left:466.4px;-webkit-text-stroke:0.35px;">Clear grouping</div>
<div style="top:644.20px;font-size:11.4px;line-height:16px;color:#1f1f1f;white-space:pre;letter-spacing:-0.120px;left:466.4px;-webkit-text-stroke:0.35px;">Toggle result panels</div>
<div style="top:644.50px;font-size:8.5px;line-height:16px;color:#b3b3b3;white-space:pre;letter-spacing:-0.210px;left:634.29px;">F7</div>
<div style="left:623.2px;top:231.6px;font-size:10.5px;line-height:16px;color:#b3b3b3;font-family:'DejaVu Sans','Liberation Sans',sans-serif;-webkit-text-stroke:0;">⌘</div>
<div style="top:232.00px;font-size:10.8px;line-height:16px;color:#b3b3b3;white-space:pre;left:635.50px;">C</div>
<div style="left:623.2px;top:267.9px;font-size:10.5px;line-height:16px;color:#b3b3b3;font-family:'DejaVu Sans','Liberation Sans',sans-serif;-webkit-text-stroke:0;">⌘</div>
<div style="top:268.30px;font-size:10.8px;line-height:16px;color:#b3b3b3;white-space:pre;left:636.10px;">V</div>
<div style="left:609.3px;top:287.6px;font-size:14px;line-height:16px;color:#b3b3b3;font-family:'DejaVu Sans','Liberation Sans',sans-serif;-webkit-text-stroke:0;">⌃</div>
<div style="left:619.2px;top:285.4px;font-size:12.5px;line-height:16px;color:#b3b3b3;font-family:'DejaVu Sans','Liberation Sans',sans-serif;-webkit-text-stroke:0;transform:scaleX(1.45);transform-origin:0 50%;">⇧</div>
<div style="top:286.00px;font-size:10.8px;line-height:16px;color:#b3b3b3;white-space:pre;left:636.10px;">V</div>
<svg style="left:449.3px;top:233.2px;" width="12" height="13" viewBox="0 0 12 13"><rect x="3" y="2.8" width="7.6" height="9.2" rx="1.4" fill="#ececec" stroke="#3f97e3" stroke-width="1.1"/><path d="M0.8 9V1.8Q0.8 0.6 2 0.6H7.4" stroke="#3f97e3" stroke-width="1.1" fill="none"/></svg>
<svg style="left:449.5px;top:269.8px;" width="10.8" height="11.6" viewBox="0 0 10.8 11.6"><rect x="0.6" y="1.7" width="9.4" height="9.2" rx="1.2" fill="#f6f9fd" stroke="#3f97e3" stroke-width="1.1"/><rect x="3.1" y="0.3" width="4.4" height="2.7" rx="0.7" fill="#3f97e3"/><rect x="4.4" y="0.9" width="1.8" height="0.9" fill="#ececec"/></svg>
<svg style="left:449.3px;top:315px;" width="10.5" height="11.5" viewBox="0 0 11 12"><path d="M0.7 0.9H10.3L6.7 5.5V10.6L4.3 9.2V5.5Z" fill="#6cb2ec" stroke="#2b8fe0" stroke-width="1.1" stroke-linejoin="round"/></svg>
<svg style="left:449.3px;top:332.8px;" width="5" height="12" viewBox="0 0 5 12"><path d="M2.5 1.6V10.4" stroke="#2b8fe0" stroke-width="1.6"/><path d="M0.6 2.7L2.5 0.5L4.4 2.7M0.6 9.3L2.5 11.5L4.4 9.3" stroke="#2b8fe0" stroke-width="1.1" fill="none"/></svg>
<svg style="left:448.8px;top:378px;" width="13" height="11" viewBox="0 0 13 11"><path d="M0.5 1.3H11.8M0.5 4.8H8.4M0.5 8.3H5" stroke="#2b8fe0" stroke-width="1.5"/><path d="M6.6 10.6L7.1 8.4L10.9 4.6L12.5 6.2L8.7 10Z" fill="#2b8fe0"/></svg>
<svg style="left:449.3px;top:467px;" width="11" height="12" viewBox="0 0 11 12"><path d="M5.5 0.3L8.7 4H6.5V8.6H4.5V4H2.3Z" fill="#2b8fe0"/><path d="M0.8 7.6V10.3Q0.8 11.2 1.7 11.2H9.3Q10.2 11.2 10.2 10.3V7.6" stroke="#2b8fe0" stroke-width="1.4" fill="none"/></svg>
<svg style="left:449px;top:511px;" width="11.5" height="13" viewBox="0 0 11.5 13"><path d="M1 6V1.8Q1 0.7 2.1 0.7H6.8L10.4 4.3V6" stroke="#2b8fe0" stroke-width="1.1" fill="none"/><path d="M6.6 0.8V4.4H10.2" stroke="#2b8fe0" stroke-width="0.9" fill="none"/><path d="M0.8 12.3H10.6" stroke="#2b8fe0" stroke-width="1"/><text x="0.6" y="10.8" font-size="5.2" font-weight="bold" fill="#2b8fe0" font-family="Liberation Sans,sans-serif" letter-spacing="-0.2">SQL</text></svg>
<svg style="left:449px;top:530px;" width="12.5" height="11" viewBox="0 0 12.5 11"><rect x="0.6" y="0.6" width="10" height="8.6" rx="1" fill="none" stroke="#86b8f7" stroke-width="1"/><path d="M0.6 3.4H10.6M4 3.4V9.2M7.2 3.4V9.2" stroke="#86b8f7" stroke-width="0.9"/><path d="M10.4 6.6V10.6M8.4 8.6H12.4" stroke="#9cc8ff" stroke-width="1.1"/></svg>
<svg style="left:449px;top:548px;" width="12" height="11" viewBox="0 0 12 11"><rect x="0" y="0" width="12" height="11" rx="1.2" fill="#1f94d8"/><rect x="1.4" y="3.2" width="2" height="6.4" fill="#8fd0f5"/><rect x="4.6" y="3.2" width="6" height="6.4" fill="#d9effc"/><rect x="6" y="4.8" width="3.2" height="3.2" fill="none" stroke="#1f94d8" stroke-width="0.8"/></svg>
<svg style="left:449px;top:574.5px;" width="12" height="12" viewBox="0 0 12 12"><g stroke="#2b8fe0" stroke-width="1.1" fill="none"><path d="M1.6 6.3A3 3 0 0 1 6.8 3.6"/><path d="M5.2 1.6L7.1 3.7L4.8 4.9"/><path d="M10.4 5.7A3 3 0 0 1 5.2 8.4"/><path d="M6.8 10.4L4.9 8.3L7.2 7.1"/><path d="M7.6 2.2A3.2 3.2 0 0 1 10.4 5"/><path d="M4.4 9.8A3.2 3.2 0 0 1 1.6 7"/></g></svg>
<svg style="left:449.5px;top:593.8px;" width="10" height="10" viewBox="0 0 10 10"><path d="M5 0.3V9.7M0.3 5H9.7" stroke="#2f9e3d" stroke-width="1.5"/></svg>
<svg style="left:450.2px;top:611px;" width="8.6" height="11" viewBox="0 0 8.6 11"><path d="M2.8 0.4H5.8V1.4H8.3V2.6H0.3V1.4H2.8Z" fill="#f1a8a1"/><path d="M0.9 3.2H7.7L7.2 10.6H1.4Z" fill="#f1a8a1"/></svg>
<svg style="left:449.6px;top:629.3px;" width="10.6" height="10.6" viewBox="0 0 10.6 10.6"><rect x="0.7" y="0.7" width="9.2" height="9.2" rx="1.2" fill="#f7c3be" stroke="#e2453a" stroke-width="1.3"/><path d="M3.2 3.2L7.4 7.4M7.4 3.2L3.2 7.4" stroke="#e2453a" stroke-width="1.2"/></svg>
<svg style="left:448.8px;top:646.4px;" width="13" height="12.5" viewBox="0 0 13 12.5"><rect x="0.7" y="0.7" width="11" height="9.8" rx="1.2" fill="#fff" stroke="#2b8fe0" stroke-width="1.3"/><rect x="0.7" y="0.7" width="11" height="3.2" fill="#2b8fe0"/><rect x="1.4" y="4" width="4" height="5.8" fill="#a9d1f5"/><circle cx="10.4" cy="10" r="2.6" fill="#ececec"/><circle cx="10.4" cy="10" r="1.5" fill="none" stroke="#2b8fe0" stroke-width="1.2"/></svg>
<svg style="left:96.2px;top:7px;" width="13" height="13" viewBox="0 0 13 13"><path d="M3 9.5V2.2Q3 0.9 4.3 0.9H11.5M9.2 0.9Q10.4 0.9 10.4 2.2V6" stroke="#2b8fe0" stroke-width="1.3" fill="none"/><path d="M0.6 10.4H7Q7 11.9 5.6 11.9H2Q0.6 11.9 0.6 10.4Z" fill="#2b8fe0"/><rect x="6.8" y="6.4" width="6" height="6.4" rx="0.8" fill="#27a044"/><path d="M8.2 9.6L9.5 11L11.6 7.8" stroke="#fff" stroke-width="1.2" fill="none"/></svg>
<svg style="left:80.7px;top:27.8px;" width="12.5" height="10.5" viewBox="0 0 12.5 10.5"><rect x="0" y="0" width="11.4" height="9" rx="1.5" fill="#2b8fe0"/><rect x="1.2" y="2.8" width="2.4" height="1.9" fill="#cfe6fa"/><rect x="4.6" y="2.8" width="5.6" height="1.9" fill="#cfe6fa"/><rect x="1.2" y="5.7" width="2.4" height="1.9" fill="#cfe6fa"/><rect x="4.6" y="5.7" width="2.4" height="1.9" fill="#cfe6fa"/><rect x="6" y="5" width="6.5" height="5.5" fill="#f0f0f0"/><path d="M8.2 6.2L6.7 7.8L8.2 9.4M10.4 6.2L11.9 7.8L10.4 9.4" stroke="#2b8fe0" stroke-width="1" fill="none"/></svg>
<svg style="left:127px;top:27px;" width="13" height="12.5" viewBox="0 0 13 12.5"><rect x="4.6" y="0.5" width="3.8" height="3.8" rx="0.6" fill="#8ec3f2" stroke="#2b8fe0" stroke-width="0.9"/><path d="M6.5 4.3V6.4M2 8.4V6.4H11V8.4M6.5 6.4V8.4" stroke="#2b8fe0" stroke-width="0.9" fill="none"/><rect x="0.5" y="8.4" width="3.2" height="3.4" rx="0.6" fill="#fff" stroke="#2b8fe0" stroke-width="0.9"/><rect x="4.9" y="8.4" width="3.2" height="3.4" rx="0.6" fill="#fff" stroke="#2b8fe0" stroke-width="0.9"/><rect x="9.3" y="8.4" width="3.2" height="3.4" rx="0.6" fill="#fff" stroke="#2b8fe0" stroke-width="0.9"/></svg>
</div></body></html>
